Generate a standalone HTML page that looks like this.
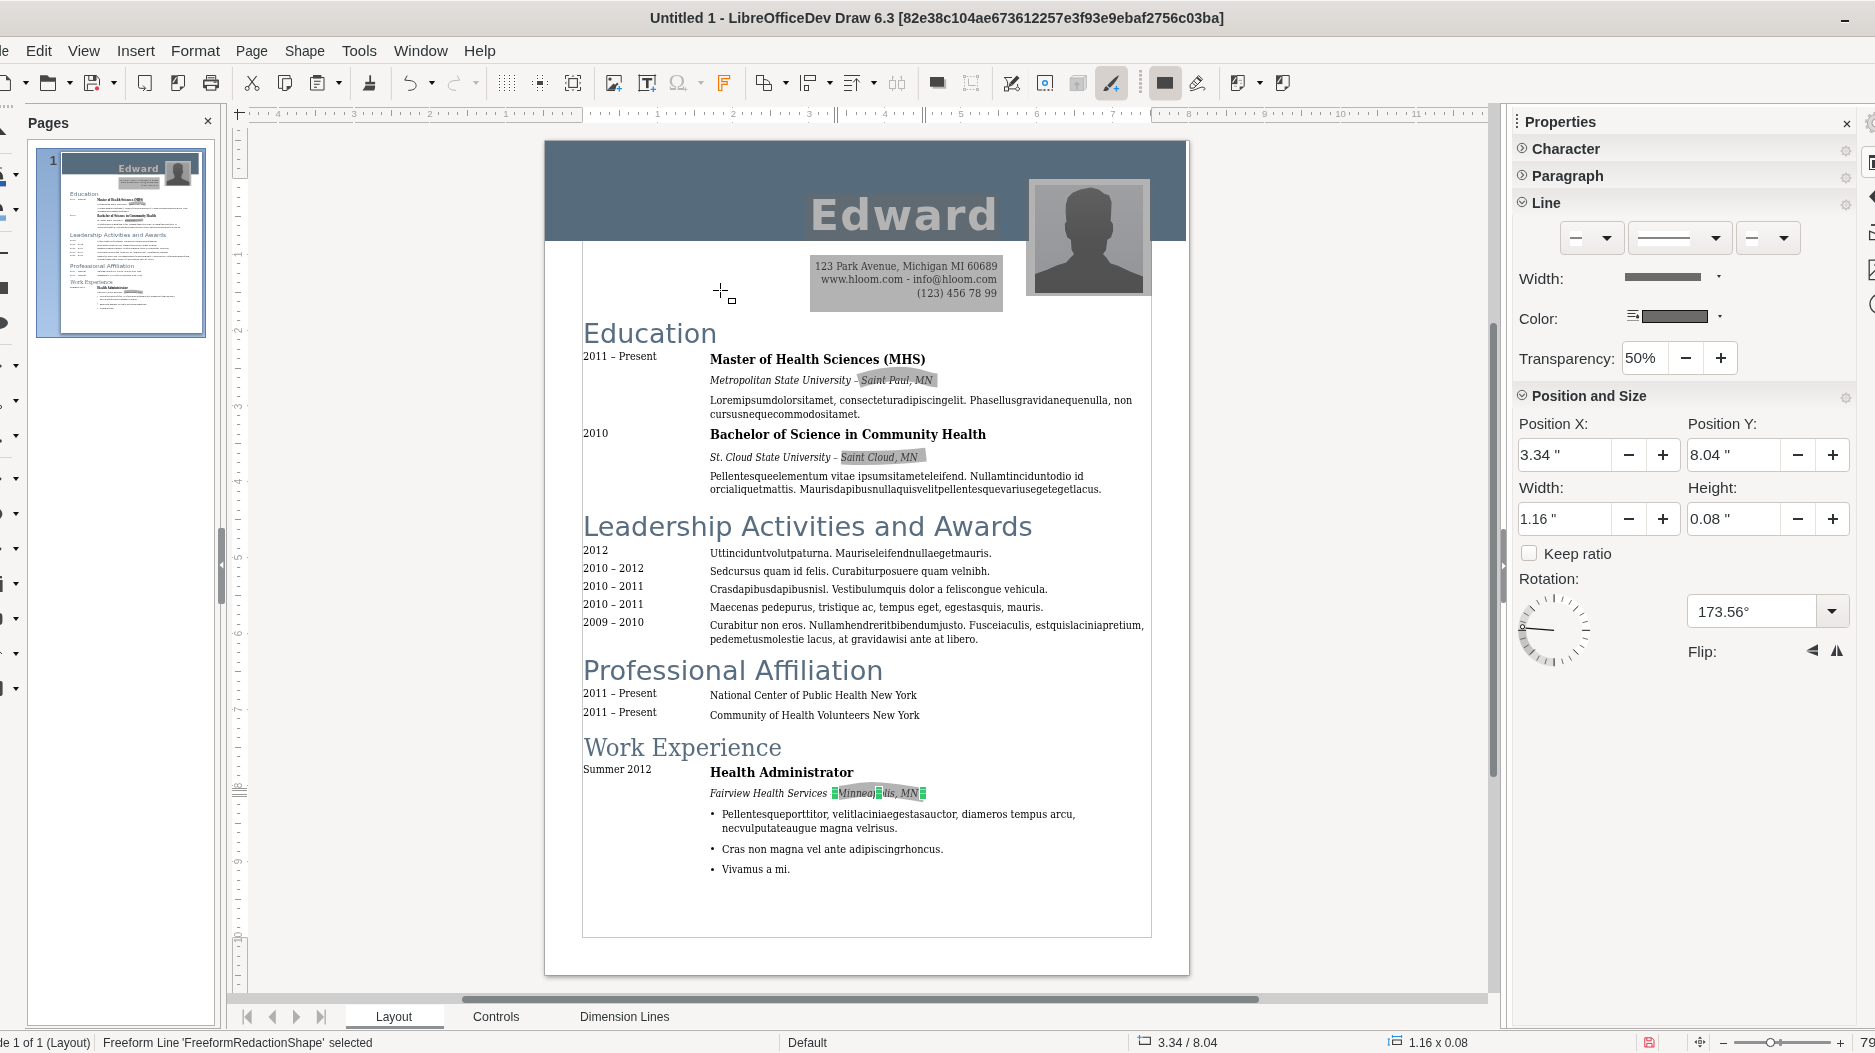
<!DOCTYPE html>
<html lang="en"><head><meta charset="utf-8"><title>Untitled 1 - LibreOfficeDev Draw 6.3</title>
<style>
*{box-sizing:border-box;margin:0;padding:0}
html,body{width:1875px;height:1053px;overflow:hidden;background:#f6f5f4;font-family:"Liberation Sans","DejaVu Sans",sans-serif;font-size:15px;color:#2e3436}
.a{position:absolute}
.t{position:absolute;white-space:nowrap;line-height:1;}
.ui{font-family:"Liberation Sans",sans-serif;color:#2e3436}
.b{font-weight:bold}
.ser{font-family:"DejaVu Serif Condensed","DejaVu Serif","Liberation Serif",serif;color:#000}
.dj{font-family:"DejaVu Sans","Liberation Sans",sans-serif}
svg{position:absolute;overflow:visible}
.sep{position:absolute;width:1px;background:#d9d6d2}
.arr{position:absolute;width:0;height:0;border-left:4px solid transparent;border-right:4px solid transparent;border-top:4px solid #2e3436}
.spin{position:absolute;background:#fff;border:1px solid #cdc7c2;border-radius:4px}
.spin i{position:absolute;top:0;bottom:0;width:1px;background:#e3dfdb}
#root{position:absolute;left:0;top:0;width:1875px;height:1053px;overflow:hidden;will-change:transform}
</style></head><body><div id="root">
<div class="a" style="left:0px;top:0px;width:1875px;height:37px;background:linear-gradient(#e2dfdc,#dad6d2);border-bottom:1px solid #bfb8b1;border-top:1px solid #f7f6f5"></div>
<span class="t ui b" style="left:649.5px;top:9.6px;font-size:15px;transform-origin:0 50%;transform:scaleX(0.9614);color:#2e3436">Untitled 1 - LibreOfficeDev Draw 6.3 [82e38c104ae673612257e3f93e9ebaf2756c03ba]</span>
<div class="a" style="left:1841px;top:20px;width:8.4px;height:2px;background:#1a1f22"></div>
<div class="a" style="left:1841px;top:22px;width:8.4px;height:1px;background:rgba(255,255,255,.85)"></div>
<div class="a" style="left:0px;top:37px;width:1875px;height:27px;background:#f6f5f4;border-bottom:1px solid #dcd8d4"></div>
<span class="t ui" style="left:-12.0px;top:42.5px;font-size:15px;transform-origin:0 50%;transform:scaleX(0.8688);">File</span>
<span class="t ui" style="left:26.0px;top:42.5px;font-size:15px;transform-origin:0 50%;transform:scaleX(1.0054);">Edit</span>
<span class="t ui" style="left:68.0px;top:42.5px;font-size:15px;transform-origin:0 50%;transform:scaleX(0.9922);">View</span>
<span class="t ui" style="left:117.0px;top:42.5px;font-size:15px;transform-origin:0 50%;transform:scaleX(1.0129);">Insert</span>
<span class="t ui" style="left:171.0px;top:42.5px;font-size:15px;transform-origin:0 50%;transform:scaleX(1.0312);">Format</span>
<span class="t ui" style="left:236.0px;top:42.5px;font-size:15px;transform-origin:0 50%;transform:scaleX(0.9131);">Page</span>
<span class="t ui" style="left:285.0px;top:42.5px;font-size:15px;transform-origin:0 50%;transform:scaleX(0.9222);">Shape</span>
<span class="t ui" style="left:342.0px;top:42.5px;font-size:15px;transform-origin:0 50%;transform:scaleX(0.9991);">Tools</span>
<span class="t ui" style="left:394.0px;top:42.5px;font-size:15px;transform-origin:0 50%;transform:scaleX(1.0120);">Window</span>
<span class="t ui" style="left:464.0px;top:42.5px;font-size:15px;transform-origin:0 50%;transform:scaleX(1.0370);">Help</span>
<span class="t" style="left:668.6px;top:70.5px;font-size:22.5px;line-height:24px;font-family:'Liberation Serif',serif;color:#b9b9b9">Ω</span>
<svg style="left:0;top:64px" width="1875" height="40" viewBox="0 64 1875 40" fill="none" stroke="#3d3d3d" stroke-width="1" stroke-linejoin="miter"><path d="M-4,75.5 H6.2 L10.4,80 V90.5 H-4" /><path d="M6,75.4 V80.2 H10.8 z" fill="#474747" stroke="none"/>
<path d="M22.8,81 h6.4 l-3.2,4 z" fill="#111" stroke="none"/>
<path d="M40,75.3 H47.2 L49.6,77.6 H56 V81.8 H40 z" fill="#474747" stroke="none"/><path d="M40.5,81.5 V90.5 H55.5 V81.5"/>
<path d="M66.8,81 h6.4 l-3.2,4 z" fill="#111" stroke="none"/>
<path d="M84.5,75.5 H96.4 L99.5,79.2 V85.4 M93.6,90.5 H84.5 V75.5"/><path d="M88.8,75.5 V80.4 H96 V75.5" /><rect x="93" y="76" width="3" height="4.4" fill="#474747" stroke="none"/><path d="M87.4,89.8 V84.1 H97"/><circle cx="97" cy="88.4" r="2.1" fill="#e23c52" stroke="none"/>
<path d="M110.8,81 h6.4 l-3.2,4 z" fill="#111" stroke="none"/>
<path d="M125.4,67 V100" stroke="#d7d3cf" stroke-width="1"/>
<path d="M138.5,86.6 V75.5 H151.2 V90.5 H146.6"/><path d="M138.5,86.5 Q138.5,88.3 140.4,88.3 H145.2"/><path d="M143,85.6 L145.7,88.3 L143,91"/>
<path d="M177.3,75.5 H184.5 V86.4 M171.8,84 V90.5 H180.1"/><path d="M179.9,86.4 H185 L179.9,90.6 z" fill="#474747" stroke="none"/><rect x="171.3" y="75.3" width="6.4" height="8.8" fill="#474747" stroke="none"/><path d="M172.9,82.6 L176.5,77.2" stroke="#f6f5f4" stroke-width="1.1"/>
<path d="M206.5,79.6 V75.5 H215.7 V79.6 M207.6,77.8 H214.6"/><rect x="203" y="79.6" width="16" height="8.6" rx="1" fill="#474747" stroke="none"/><rect x="204.6" y="81.4" width="12.8" height="3.6" fill="#f6f5f4" stroke="none"/><rect x="213.6" y="81.6" width="3" height="1.2" fill="#474747" stroke="none"/><rect x="206.4" y="85.4" width="9.4" height="4.7" fill="#f6f5f4" stroke="#3d3d3d" stroke-width="1.1"/>
<path d="M232.4,67 V100" stroke="#d7d3cf" stroke-width="1"/>
<path d="M247.6,76 L256,87 M256.6,76 L248.2,87" stroke-width="1.2"/><circle cx="247.2" cy="88.4" r="2"/><circle cx="257" cy="88.4" r="2"/>
<path d="M278.5,75.5 H290 V88.3 H278.5 z"/><path d="M282.6,78.7 H291.5 V86 L287,90.5 H282.6 z" fill="#f6f5f4"/><path d="M286.6,86 H291.9 L286.6,90.6 z" fill="#474747" stroke="none"/>
<path d="M310.5,77.5 H324 V90 H310.5 z"/><rect x="313" y="75" width="8.4" height="3.6" fill="#474747" stroke="none"/><path d="M314,81.3 H320.6 M314,84.3 H319.6 M314,87.3 H317" stroke-width="1.1"/>
<path d="M335.8,81 h6.4 l-3.2,4 z" fill="#111" stroke="none"/>
<path d="M350.4,67 V100" stroke="#d7d3cf" stroke-width="1"/>
<path d="M370.2,75.3 V82" stroke-width="1.7"/><rect x="365.3" y="81.8" width="9.8" height="2.6" fill="#474747" stroke="none"/><path d="M365.4,85.6 H375.1 Q375.4,88.6 374.2,90.5 H362.4 Q364.6,88.6 365.4,85.6 z" fill="#474747" stroke="none"/>
<path d="M391.3,67 V100" stroke="#d7d3cf" stroke-width="1"/>
<path d="M407.2,75.6 L404.7,80.1 L410,80.6 C 414,81 416.1,83 416.1,85.6 C 416.1,88.7 413,90.5 408.2,90.3"/>
<path d="M428.8,81 h6.4 l-3.2,4 z" fill="#111" stroke="none"/>
<g stroke="#b9b9b9"><path d="M457.2,75.6 L459.7,80.1 L454.4,80.6 C 450.4,81 448.3,83 448.3,85.6 C 448.3,88.7 451.4,90.5 456.2,90.3"/></g>
<path d="M472.8,81 h6.4 l-3.2,4 z" fill="#b9b9b9" stroke="none"/>
<path d="M486.6,67 V100" stroke="#d7d3cf" stroke-width="1"/>
<g fill="#3d3d3d" stroke="none"><rect x="498" y="74" width="3" height="3" fill="#fff" opacity=".7"/><rect x="498" y="77" width="3" height="3" fill="#fff" opacity=".7"/><rect x="498" y="80" width="3" height="3" fill="#fff" opacity=".7"/><rect x="498" y="83" width="3" height="3" fill="#fff" opacity=".7"/><rect x="498" y="86" width="3" height="3" fill="#fff" opacity=".7"/><rect x="498" y="89" width="3" height="3" fill="#fff" opacity=".7"/><rect x="503" y="74" width="3" height="3" fill="#fff" opacity=".7"/><rect x="503" y="77" width="3" height="3" fill="#fff" opacity=".7"/><rect x="503" y="80" width="3" height="3" fill="#fff" opacity=".7"/><rect x="503" y="83" width="3" height="3" fill="#fff" opacity=".7"/><rect x="503" y="86" width="3" height="3" fill="#fff" opacity=".7"/><rect x="503" y="89" width="3" height="3" fill="#fff" opacity=".7"/><rect x="508" y="74" width="3" height="3" fill="#fff" opacity=".7"/><rect x="508" y="77" width="3" height="3" fill="#fff" opacity=".7"/><rect x="508" y="80" width="3" height="3" fill="#fff" opacity=".7"/><rect x="508" y="83" width="3" height="3" fill="#fff" opacity=".7"/><rect x="508" y="86" width="3" height="3" fill="#fff" opacity=".7"/><rect x="508" y="89" width="3" height="3" fill="#fff" opacity=".7"/><rect x="513" y="74" width="3" height="3" fill="#fff" opacity=".7"/><rect x="513" y="77" width="3" height="3" fill="#fff" opacity=".7"/><rect x="513" y="80" width="3" height="3" fill="#fff" opacity=".7"/><rect x="513" y="83" width="3" height="3" fill="#fff" opacity=".7"/><rect x="513" y="86" width="3" height="3" fill="#fff" opacity=".7"/><rect x="513" y="89" width="3" height="3" fill="#fff" opacity=".7"/><rect x="499" y="75" width="1" height="1"/><rect x="499" y="78" width="1" height="1"/><rect x="499" y="81" width="1" height="1"/><rect x="499" y="84" width="1" height="1"/><rect x="499" y="87" width="1" height="1"/><rect x="499" y="90" width="1" height="1"/><rect x="504" y="75" width="1" height="1"/><rect x="504" y="78" width="1" height="1"/><rect x="504" y="81" width="1" height="1"/><rect x="504" y="84" width="1" height="1"/><rect x="504" y="87" width="1" height="1"/><rect x="504" y="90" width="1" height="1"/><rect x="509" y="75" width="1" height="1"/><rect x="509" y="78" width="1" height="1"/><rect x="509" y="81" width="1" height="1"/><rect x="509" y="84" width="1" height="1"/><rect x="509" y="87" width="1" height="1"/><rect x="509" y="90" width="1" height="1"/><rect x="514" y="75" width="1" height="1"/><rect x="514" y="78" width="1" height="1"/><rect x="514" y="81" width="1" height="1"/><rect x="514" y="84" width="1" height="1"/><rect x="514" y="87" width="1" height="1"/><rect x="514" y="90" width="1" height="1"/></g>
<g fill="#3d3d3d" stroke="none"><rect x="536" y="74" width="3" height="3" fill="#fff" opacity=".7"/><rect x="536" y="77" width="3" height="3" fill="#fff" opacity=".7"/><rect x="541" y="74" width="3" height="3" fill="#fff" opacity=".7"/><rect x="541" y="77" width="3" height="3" fill="#fff" opacity=".7"/><rect x="536" y="86" width="3" height="3" fill="#fff" opacity=".7"/><rect x="536" y="89" width="3" height="3" fill="#fff" opacity=".7"/><rect x="541" y="86" width="3" height="3" fill="#fff" opacity=".7"/><rect x="541" y="89" width="3" height="3" fill="#fff" opacity=".7"/><rect x="531" y="80" width="3" height="3" fill="#fff" opacity=".7"/><rect x="531" y="83" width="3" height="3" fill="#fff" opacity=".7"/><rect x="546" y="80" width="3" height="3" fill="#fff" opacity=".7"/><rect x="546" y="83" width="3" height="3" fill="#fff" opacity=".7"/><rect x="537" y="75" width="1" height="1"/><rect x="537" y="78" width="1" height="1"/><rect x="542" y="75" width="1" height="1"/><rect x="542" y="78" width="1" height="1"/><rect x="537" y="87" width="1" height="1"/><rect x="537" y="90" width="1" height="1"/><rect x="542" y="87" width="1" height="1"/><rect x="542" y="90" width="1" height="1"/><rect x="532" y="81" width="1" height="1"/><rect x="532" y="84" width="1" height="1"/><rect x="547" y="81" width="1" height="1"/><rect x="547" y="84" width="1" height="1"/><rect x="536" y="80" width="8" height="6" fill="#fff"/><rect x="537" y="81" width="6" height="4" fill="#474747"/></g>
<path d="M565.5,79 V75.5 H569 M577,75.5 H580.5 V79 M580.5,87 V90.5 H577 M569,90.5 H565.5 V87"/><rect x="568.8" y="78.6" width="8.6" height="8.8" stroke-width="1.1"/><path d="M571.6,76.4 L573,75 L574.4,76.4z M571.6,89.6 L573,91 L574.4,89.6z M566.4,81.6 L565,83 L566.4,84.4z M579.6,81.6 L581,83 L579.6,84.4z" fill="#474747" stroke="none"/>
<path d="M594.4,67 V100" stroke="#d7d3cf" stroke-width="1"/>
<path d="M621.2,82.6 V75.5 H606.8 V90.5 H615"/><circle cx="610" cy="79.1" r="1.7" fill="#474747" stroke="none"/><path d="M607.3,89.8 L613.6,83.4 L615,84.8 L617.4,82.6 L618.6,84.2 L616.4,86 L615.4,89.8 z" fill="#474747" stroke="none"/><path d="M619.3,86 V91.4 M616.6,88.7 H622" stroke="#1e8ee6" stroke-width="1.3"/>
<path d="M639.3,74.4 V91.6 M655,74.4 V85 M638.2,75.5 H656.2 M638.2,90.5 H649.4"/><path d="M642.2,79.2 H652.2" stroke-width="2.3"/><path d="M647.3,79 V88.2" stroke-width="2.6"/><path d="M653.3,86.6 V92 M650.6,89.3 H656" stroke="#1e8ee6" stroke-width="1.3"/>
<path d="M685.3,87.2 V91.4 M683.2,89.3 H687.4" stroke="#b9b9b9" stroke-width="1"/>
<path d="M697.8,81 h6.4 l-3.2,4 z" fill="#b9b9b9" stroke="none"/>
<path d="M718.6,75.5 H729.6 V78.6 H721.8 V81.6 H727.2 V84.4 H721.8 V90.5 H718.6 z" stroke="#f57900" stroke-width="1.2"/>
<path d="M745.6,67 V100" stroke="#d7d3cf" stroke-width="1"/>
<rect x="756.5" y="75.5" width="7" height="9"/><path d="M764,79.5 Q769.5,79.6 769.9,84"/><path d="M763.5,84.5 V90.5 H771.5 V84.5 H764" />
<path d="M782.8,81 h6.4 l-3.2,4 z" fill="#111" stroke="none"/>
<path d="M800.5,75 V91"/><rect x="804.5" y="75.5" width="11" height="5"/><rect x="804.5" y="85.5" width="4" height="5"/>
<path d="M826.8,81 h6.4 l-3.2,4 z" fill="#111" stroke="none"/>
<path d="M844,75.5 H860 M844,80.5 H852 M844,85.5 H852 M844,90.5 H852"/><path d="M856.5,78.8 V91 M853.2,82.4 L856.5,78.6 L859.8,82.4"/>
<path d="M870.8,81 h6.4 l-3.2,4 z" fill="#111" stroke="none"/>
<g stroke="#b9b9b9"><rect x="889.5" y="80.5" width="6" height="8"/><rect x="898.5" y="80.5" width="6" height="8"/><path d="M892.5,76 V80 M892.5,89 V91 M901.5,76 V80 M901.5,89 V91 M892.5,76 l1.6,1.4 M901.5,76 l-1.6,1.4"/></g>
<path d="M918.3,67 V100" stroke="#d7d3cf" stroke-width="1"/>
<rect x="932.6" y="79.3" width="13.6" height="9.4" fill="#b5b5b5" stroke="none"/><rect x="930" y="77" width="14" height="9.7" fill="#474747" stroke="none"/>
<g stroke="#b9b9b9"><path d="M966.6,76.5 H976 M966.6,89.5 H976 M964.5,78.8 V87.6 M977.5,78.8 V87.6" stroke-dasharray="1.6 1.5"/><rect x="963.5" y="75.5" width="2" height="2"/><rect x="976.5" y="75.5" width="2" height="2"/><rect x="963.5" y="88.5" width="2" height="2"/><rect x="976.5" y="88.5" width="2" height="2"/><path d="M968.5,78.6 V85.5 H975.6"/></g>
<path d="M992.4,67 V100" stroke="#d7d3cf" stroke-width="1"/>
<path d="M1004,77.5 H1012 M1004.6,77.8 Q1009,81.4 1007.2,86.6"/><rect x="1004.5" y="86.9" width="4" height="4"/><path d="M1008.6,88.9 H1015.6 M1017.6,84 V86.6"/><path d="M1017.6,86.6 L1019.8,88.9 L1017.6,91.2 L1015.4,88.9z" fill="#f6f5f4"/><path d="M1011.2,84 L1018.2,76.8" stroke-width="3.8"/><path d="M1008.4,87 L1009.6,82.8 L1012.6,85.6z" fill="#474747" stroke="none"/>
<path d="M1028.6,68 V100" stroke="#f1efed" stroke-width="1"/>
<path d="M1052.5,88 V75.5 H1037.5 V90 H1042.4"/><path d="M1043.5,90 H1053" stroke-width="1.5" stroke-dasharray="2 2"/><circle cx="1045" cy="83" r="2.3" stroke="#1e8ee6" stroke-width="1.5"/>
<g stroke="#b9b9b9" stroke-width=".9"><path d="M1070.2,78.2 L1073.2,75.6 H1086.4 L1083.3,78.2z" fill="#f2f2f2"/><path d="M1083.3,78.2 L1086.4,75.6 V88.2 L1083.3,90.6z" fill="#dcdcdc"/><rect x="1070.2" y="78.2" width="13.1" height="12.4" fill="#c9c9c9"/><path d="M1076.8,89.6 V83.4 M1074.4,85 L1076.8,82.6 L1079.2,85" stroke="#aeaeae" stroke-width="1.6" fill="none"/></g>
<rect x="1095" y="66" width="33" height="34.6" rx="5" fill="#d6d1cd" stroke="none"/>
<path d="M1118.9,75.2 C 1115.4,76.8 1110,82 1107.2,85.6 L1109.8,87.8 C 1113.4,84.6 1118,79 1118.9,75.2 z" fill="#474747" stroke="none"/><path d="M1106.4,86.2 C 1104.2,86.6 1104.6,89.4 1103.1,90.8 C 1105.8,91.4 1108.8,90.6 1109,88.4 z" fill="#474747" stroke="none"/><path d="M1116.4,86 V91.4 M1113.7,88.7 H1119.1" stroke="#1e8ee6" stroke-width="1.3"/>
<g fill="#bbb7b3" stroke="none"><rect x="1139" y="70" width="3" height="2.6"/><rect x="1139" y="74" width="3" height="2.6"/><rect x="1139" y="78.1" width="3" height="2.6"/><rect x="1139" y="82.2" width="3" height="2.6"/><rect x="1139" y="86.3" width="3" height="2.6"/><rect x="1139" y="90.3" width="3" height="2.6"/></g>
<rect x="1149" y="66" width="33" height="34.6" rx="5" fill="#d6d1cd" stroke="none"/><rect x="1157" y="77" width="16" height="11.7" fill="#474747" stroke="none"/>
<path d="M1190.2,88.2 V84.8 L1198.6,75.5 L1202.6,79.4 L1194,88 z"/><path d="M1192.2,82.8 L1196,86.2 M1193.8,81 L1197.6,84.4" /><path d="M1197,77.4 L1201,81" stroke-width="2"/><path d="M1190,90.8 C 1195,90.6 1198,87.8 1201.6,87.2 C 1205.6,86.8 1206,89.8 1203.2,90"/>
<path d="M1219.6,67 V100" stroke="#d7d3cf" stroke-width="1"/>
<path d="M1237,75.5 H1244.2 V86.4 M1231.5,84 V90.5 H1239.8"/><path d="M1239.6,86.4 H1244.7 L1239.6,90.6 z" fill="#474747" stroke="none"/><rect x="1231" y="75.3" width="6.4" height="8.8" fill="#474747" stroke="none"/><path d="M1232.6,82.6 L1236.2,77.2" stroke="#f6f5f4" stroke-width="1.1"/>
<path d="M1238.6,80.4 H1242 M1240,83.4 H1242 M1234,86.2 H1237" stroke="#9a9a9a" stroke-width=".9"/>
<path d="M1256.8,81 h6.4 l-3.2,4 z" fill="#111" stroke="none"/>
<path d="M1282,75.5 H1289.2 V86.4 M1276.5,84 V90.5 H1284.8"/><path d="M1284.6,86.4 H1289.7 L1284.6,90.6 z" fill="#474747" stroke="none"/><rect x="1276" y="75.3" width="6.4" height="8.8" fill="#474747" stroke="none"/><path d="M1277.6,82.6 L1281.2,77.2" stroke="#f6f5f4" stroke-width="1.1"/></svg>
<div class="a" style="left:-1px;top:105px;width:16px;height:3px;background:repeating-linear-gradient(90deg,#bcb8b4 0 2px,transparent 2px 4px)"></div>
<svg style="left:0;top:124px" width="10" height="16" viewBox="0 0 10 16"><path d="M0,4 L6.4,11 H0 z" fill="#3a3d3f"/></svg>
<div class="a" style="left:0px;top:153px;width:12px;height:1px;background:#d8d4d0"></div>
<div class="a" style="left:0px;top:231px;width:12px;height:1px;background:#d8d4d0"></div>
<div class="a" style="left:0px;top:344px;width:12px;height:1px;background:#d8d4d0"></div>
<div class="a" style="left:0px;top:457px;width:12px;height:1px;background:#d8d4d0"></div>
<svg style="left:0;top:164px" width="10" height="24" viewBox="0 0 10 24"><path d="M0,4 h2 M0,8 c1.6,0.6 2.6,3 2.8,7 H0 z" fill="#3a3d3f" stroke="#3a3d3f"/><rect x="0" y="17" width="6" height="5.4" fill="#2a5fb0"/></svg>
<div class="arr" style="left:12.8px;top:173px;border-width:4px 3.2px 0 3.2px;border-top-color:#111"></div>
<svg style="left:0;top:198px" width="10" height="24" viewBox="0 0 10 24"><path d="M0,6 c2,1 3,3.4 3,7 H0 z" fill="#3a3d3f"/><rect x="0" y="17.4" width="6" height="5.4" fill="#7aa7dc"/></svg>
<div class="arr" style="left:12.8px;top:207.5px;border-width:4px 3.2px 0 3.2px;border-top-color:#111"></div>
<div class="a" style="left:0px;top:252.4px;width:8px;height:1.4px;background:#3a3d3f"></div>
<div class="a" style="left:0px;top:282px;width:8px;height:12px;background:#46484a"></div>
<svg style="left:0;top:316px" width="10" height="14" viewBox="0 0 10 14"><ellipse cx="-2" cy="7" rx="10" ry="6" fill="#46484a"/></svg>
<div class="arr" style="left:12.8px;top:363.5px;border-width:4px 3.2px 0 3.2px;border-top-color:#111"></div>
<div class="arr" style="left:12.8px;top:398.5px;border-width:4px 3.2px 0 3.2px;border-top-color:#111"></div>
<div class="arr" style="left:12.8px;top:433.5px;border-width:4px 3.2px 0 3.2px;border-top-color:#111"></div>
<div class="arr" style="left:12.8px;top:476.5px;border-width:4px 3.2px 0 3.2px;border-top-color:#111"></div>
<div class="arr" style="left:12.8px;top:511.5px;border-width:4px 3.2px 0 3.2px;border-top-color:#111"></div>
<div class="arr" style="left:12.8px;top:546.5px;border-width:4px 3.2px 0 3.2px;border-top-color:#111"></div>
<div class="arr" style="left:12.8px;top:581.5px;border-width:4px 3.2px 0 3.2px;border-top-color:#111"></div>
<div class="arr" style="left:12.8px;top:616.5px;border-width:4px 3.2px 0 3.2px;border-top-color:#111"></div>
<div class="arr" style="left:12.8px;top:651.5px;border-width:4px 3.2px 0 3.2px;border-top-color:#111"></div>
<div class="arr" style="left:12.8px;top:686.5px;border-width:4px 3.2px 0 3.2px;border-top-color:#111"></div>
<svg style="left:0;top:355.5px" width="8" height="20" viewBox="0 -10 8 20"><circle cx="0" cy="0" r="1.6" fill="#3a3d3f"/></svg>
<svg style="left:0;top:390.5px" width="8" height="20" viewBox="0 -10 8 20"><circle cx="0" cy="6" r="1.6" fill="none" stroke="#3a3d3f"/></svg>
<svg style="left:0;top:425.5px" width="8" height="20" viewBox="0 -10 8 20"><circle cx="0" cy="5" r="1.8" fill="#3a3d3f"/></svg>
<svg style="left:0;top:468.5px" width="8" height="20" viewBox="0 -10 8 20"><circle cx="0" cy="0" r="1.4" fill="#3a3d3f"/></svg>
<svg style="left:0;top:503.5px" width="8" height="20" viewBox="0 -10 8 20"><ellipse cx="-4" cy="0" rx="6.4" ry="6" fill="#46484a"/></svg>
<svg style="left:0;top:538.5px" width="8" height="20" viewBox="0 -10 8 20"><circle cx="0" cy="0" r="1.4" fill="#3a3d3f"/></svg>
<svg style="left:0;top:573.5px" width="8" height="20" viewBox="0 -10 8 20"><rect x="-3" y="-4" width="5.6" height="12" fill="#46484a"/><rect x="-3" y="-8" width="5" height="2.4" fill="#46484a"/></svg>
<svg style="left:0;top:608.5px" width="8" height="20" viewBox="0 -10 8 20"><rect x="-6" y="-6" width="8.4" height="12" rx="3" fill="#46484a"/></svg>
<svg style="left:0;top:643.5px" width="8" height="20" viewBox="0 -10 8 20"><path d="M0,-2 l2,2" stroke="#3a3d3f"/></svg>
<svg style="left:0;top:678.5px" width="8" height="20" viewBox="0 -10 8 20"><rect x="-6" y="-8" width="8.6" height="15" rx="2" fill="#46484a"/></svg>
<div class="a" style="left:25px;top:103px;width:202px;height:1px;background:#adadad"></div>
<div class="a" style="left:220px;top:103px;width:1px;height:925px;background:#adadad"></div>
<div class="a" style="left:226px;top:103px;width:1px;height:928px;background:#adadad"></div>
<div class="a" style="left:25px;top:1028px;width:196px;height:1px;background:#adadad"></div>
<span class="t ui b" style="left:28.3px;top:115.0px;font-size:15.4px;transform-origin:0 50%;transform:scaleX(0.9017);color:#2e3436">Pages</span>
<svg style="left:203px;top:116px" width="10" height="10" viewBox="0 0 10 10"><path d="M2,2 l6,6 M8,2 l-6,6" stroke="#3a3d3f" stroke-width="1.1"/></svg>
<div class="a" style="left:27px;top:139px;width:188px;height:887px;background:#fff;border:1px solid #b4b2b0"></div>
<div class="a" style="left:36px;top:148px;width:170px;height:190px;background:linear-gradient(#8aa9d0,#abc8ea);border:1px solid #5a7db0"></div>
<span class="t ui b" style="left:49.8px;top:153.9px;font-size:13px;color:#464a4c">1</span>
<div class="a" style="left:61px;top:152px;width:140.7px;height:181.2px;background:#fff;box-shadow:0 1px 3px 1px rgba(40,50,70,.55)"></div>
<div class="a" style="left:61.9px;top:152.7px;width:643px;height:834px;overflow:hidden;transform-origin:0 0;transform:scale(0.21320)"><div class="a" style="left:0px;top:0px;width:640.8px;height:100px;background:#566c7d"></div>

<span class="t dj b" style="left:264.5px;top:53.0px;font-size:43px;letter-spacing:1.485px;color:#fff">Edward</span>
<span class="t ser" style="left:270.0px;top:119.8px;font-size:10.5px;transform-origin:0 50%;transform:scaleX(1.0073);color:#000">123 Park Avenue, Michigan MI 60689</span>
<span class="t ser" style="left:276.0px;top:133.2px;font-size:10.5px;transform-origin:0 50%;transform:scaleX(1.0497);color:#000">www.hloom.com - info@hloom.com</span>
<span class="t ser" style="left:372.0px;top:146.8px;font-size:10.5px;transform-origin:0 50%;transform:scaleX(1.0462);color:#000">(123) 456 78 99</span>
<div class="a" style="left:484px;top:38px;width:120.5px;height:117.3px;background:#fff"></div>
<svg style="left:490px;top:44px;overflow:hidden" width="108" height="108" viewBox="0 0 108 108"><defs><linearGradient id="pg2" x1="0" y1="0" x2="0" y2="1"><stop offset="0" stop-color="#d6d7dc"/><stop offset="1" stop-color="#bfc1c8"/></linearGradient><linearGradient id="sg2" x1="0" y1="0" x2="0" y2="1"><stop offset="0" stop-color="#585858"/><stop offset=".5" stop-color="#3e3e3e"/><stop offset="1" stop-color="#3a3a3a"/></linearGradient><filter id="bl2"><feGaussianBlur stdDeviation="1.6"/></filter></defs><rect width="108" height="108" fill="url(#pg2)"/><polygon points="0.0,108.1 0.0,89.7 12.2,85.3 22.4,80.8 31.4,78.2 36.5,72.4 39.7,69.2 37.2,64.7 36.5,54.5 32.7,51.9 30.8,45.5 30.4,39.1 32.1,36.5 31.2,27.6 31.4,19.9 33.3,12.8 37.8,8.3 45.5,5.1 55.8,3.2 63.5,5.1 68.6,9.0 73.7,10.9 76.0,17.3 75.6,27.6 75.0,35.9 77.3,39.1 77.6,45.5 75.6,51.9 71.8,54.5 70.5,64.7 67.3,69.2 70.5,72.4 75.0,78.8 82.7,81.4 95.5,87.2 108.1,92.3 108.1,108.1" fill="#e4e5ea" filter="url(#bl2)" opacity=".6"/><polygon points="0.0,108.1 0.0,89.7 12.2,85.3 22.4,80.8 31.4,78.2 36.5,72.4 39.7,69.2 37.2,64.7 36.5,54.5 32.7,51.9 30.8,45.5 30.4,39.1 32.1,36.5 31.2,27.6 31.4,19.9 33.3,12.8 37.8,8.3 45.5,5.1 55.8,3.2 63.5,5.1 68.6,9.0 73.7,10.9 76.0,17.3 75.6,27.6 75.0,35.9 77.3,39.1 77.6,45.5 75.6,51.9 71.8,54.5 70.5,64.7 67.3,69.2 70.5,72.4 75.0,78.8 82.7,81.4 95.5,87.2 108.1,92.3 108.1,108.1" fill="url(#sg2)" stroke="url(#sg2)" stroke-width="1.2" stroke-linejoin="round"/></svg>
<span class="t dj" style="left:38.0px;top:179.0px;font-size:27.4px;transform-origin:0 50%;transform:scaleX(0.9848);color:#586e80">Education</span>
<span class="t dj" style="left:38.0px;top:372.0px;font-size:27.4px;transform-origin:0 50%;transform:scaleX(0.9938);color:#586e80">Leadership Activities and Awards</span>
<span class="t dj" style="left:38.0px;top:515.6px;font-size:27.4px;transform-origin:0 50%;transform:scaleX(0.9917);color:#586e80">Professional Affiliation</span>
<span class="t ser" style="left:38.5px;top:593.6px;font-size:25px;transform-origin:0 50%;transform:scaleX(1.0158);color:#586e80">Work Experience</span>
<span class="t ser" style="left:38.3px;top:209.8px;font-size:10.5px;transform-origin:0 50%;transform:scaleX(1.0303);">2011 – Present</span>
<span class="t ser" style="left:38.3px;top:287.2px;font-size:10.5px;transform-origin:0 50%;transform:scaleX(1.0480);">2010</span>
<span class="t ser" style="left:38.3px;top:403.8px;font-size:10.5px;transform-origin:0 50%;transform:scaleX(1.0480);">2012</span>
<span class="t ser" style="left:38.3px;top:422.0px;font-size:10.5px;transform-origin:0 50%;transform:scaleX(1.0392);">2010 – 2012</span>
<span class="t ser" style="left:38.3px;top:440.0px;font-size:10.5px;transform-origin:0 50%;transform:scaleX(1.0392);">2010 – 2011</span>
<span class="t ser" style="left:38.3px;top:458.0px;font-size:10.5px;transform-origin:0 50%;transform:scaleX(1.0392);">2010 – 2011</span>
<span class="t ser" style="left:38.3px;top:476.0px;font-size:10.5px;transform-origin:0 50%;transform:scaleX(1.0392);">2009 – 2010</span>
<span class="t ser" style="left:38.3px;top:546.8px;font-size:10.5px;transform-origin:0 50%;transform:scaleX(1.0303);">2011 – Present</span>
<span class="t ser" style="left:38.3px;top:566.0px;font-size:10.5px;transform-origin:0 50%;transform:scaleX(1.0303);">2011 – Present</span>
<span class="t ser" style="left:38.3px;top:623.4px;font-size:10.5px;transform-origin:0 50%;transform:scaleX(1.0161);">Summer 2012</span>
<span class="t ser b" style="left:165.3px;top:212.0px;font-size:13.6px;transform-origin:0 50%;transform:scaleX(0.9378);">Master of Health Sciences (MHS)</span>
<span class="t ser b" style="left:165.3px;top:287.3px;font-size:13.6px;transform-origin:0 50%;transform:scaleX(0.9593);">Bachelor of Science in Community Health</span>
<span class="t ser b" style="left:165.3px;top:624.7px;font-size:13.6px;transform-origin:0 50%;transform:scaleX(0.9753);">Health Administrator</span>
<span class="t ser" style="left:165.3px;top:234.4px;font-size:10.5px;transform-origin:0 50%;transform:scaleX(0.9827);font-style:italic">Metropolitan State University – Saint Paul, MN</span>
<span class="t ser" style="left:165.3px;top:310.7px;font-size:10.5px;transform-origin:0 50%;transform:scaleX(0.9623);font-style:italic">St. Cloud State University – Saint Cloud, MN</span>
<span class="t ser" style="left:165.3px;top:647.0px;font-size:10.5px;transform-origin:0 50%;transform:scaleX(0.9756);font-style:italic">Fairview Health Services – Minneapolis, MN</span>
<span class="t ser" style="left:165.3px;top:254.0px;font-size:10.5px;transform-origin:0 50%;transform:scaleX(1.0241);">Loremipsumdolorsitamet, consecteturadipiscingelit. Phasellusgravidanequenulla, non</span>
<span class="t ser" style="left:165.3px;top:267.8px;font-size:10.5px;transform-origin:0 50%;transform:scaleX(1.0301);">cursusnequecommodositamet.</span>
<span class="t ser" style="left:165.3px;top:330.4px;font-size:10.5px;transform-origin:0 50%;transform:scaleX(1.0270);">Pellentesqueelementum vitae ipsumsitameteleifend. Nullamtinciduntodio id</span>
<span class="t ser" style="left:165.3px;top:343.3px;font-size:10.5px;transform-origin:0 50%;transform:scaleX(1.0188);">orcialiquetmattis. Maurisdapibusnullaquisvelitpellentesquevariusegetegetlacus.</span>
<span class="t ser" style="left:165.3px;top:406.7px;font-size:10.5px;transform-origin:0 50%;transform:scaleX(1.0214);">Uttinciduntvolutpaturna. Mauriseleifendnullaegetmauris.</span>
<span class="t ser" style="left:165.3px;top:424.5px;font-size:10.5px;transform-origin:0 50%;transform:scaleX(1.0123);">Sedcursus quam id felis. Curabiturposuere quam velnibh.</span>
<span class="t ser" style="left:165.3px;top:442.6px;font-size:10.5px;transform-origin:0 50%;transform:scaleX(1.0107);">Crasdapibusdapibusnisl. Vestibulumquis dolor a feliscongue vehicula.</span>
<span class="t ser" style="left:165.3px;top:460.5px;font-size:10.5px;transform-origin:0 50%;transform:scaleX(1.0027);">Maecenas pedepurus, tristique ac, tempus eget, egestasquis, mauris.</span>
<span class="t ser" style="left:165.3px;top:478.5px;font-size:10.5px;transform-origin:0 50%;transform:scaleX(1.0172);">Curabitur non eros. Nullamhendreritbibendumjusto. Fusceiaculis, estquislaciniapretium,</span>
<span class="t ser" style="left:165.3px;top:492.6px;font-size:10.5px;transform-origin:0 50%;transform:scaleX(1.0131);">pedemetusmolestie lacus, at gravidawisi ante at libero.</span>
<span class="t ser" style="left:165.3px;top:549.3px;font-size:10.5px;transform-origin:0 50%;transform:scaleX(1.0011);">National Center of Public Health New York</span>
<span class="t ser" style="left:165.3px;top:568.5px;font-size:10.5px;transform-origin:0 50%;transform:scaleX(1.0182);">Community of Health Volunteers New York</span>
<span class="t ser" style="left:177.3px;top:667.8px;font-size:10.5px;transform-origin:0 50%;transform:scaleX(1.0354);">Pellentesqueporttitor, velitlaciniaegestasauctor, diameros tempus arcu,</span>
<span class="t ser" style="left:177.3px;top:681.6px;font-size:10.5px;transform-origin:0 50%;transform:scaleX(1.0312);">necvulputateaugue magna velrisus.</span>
<span class="t ser" style="left:177.3px;top:702.6px;font-size:10.5px;transform-origin:0 50%;transform:scaleX(1.0394);">Cras non magna vel ante adipiscingrhoncus.</span>
<span class="t ser" style="left:177.3px;top:723.4px;font-size:10.5px;transform-origin:0 50%;transform:scaleX(1.0160);">Vivamus a mi.</span>
<div class="a" style="left:166.3px;top:671.2px;width:3.2px;height:3.2px;background:#111;border-radius:50%"></div>
<div class="a" style="left:166.3px;top:706px;width:3.2px;height:3.2px;background:#111;border-radius:50%"></div>
<div class="a" style="left:166.3px;top:726.8px;width:3.2px;height:3.2px;background:#111;border-radius:50%"></div>
<div class="a" style="left:261px;top:53px;width:193px;height:47px;background:rgba(104,104,104,.5)"></div>
<div class="a" style="left:264.6px;top:114px;width:193.4px;height:56.6px;background:rgba(104,104,104,.5)"></div>
<div class="a" style="left:481px;top:38px;width:125.5px;height:117.3px;background:rgba(104,104,104,.5)"></div>
<svg style="left:0;top:0" width="643" height="834" viewBox="545 141 643 834" fill="none" stroke="rgba(104,104,104,.5)" stroke-width="14"><path d="M858.5,381 C 875,376 895,372.5 910,374.5 S 928,380.5 937.5,380.5"/><path d="M841.3,457.4 C 865,458.5 890,458.5 926,454.6"/><path d="M835.5,793.3 C 853,791.5 860,789 872,789 S 905,792 924.3,795.4"/></svg></div>
<div class="a" style="left:218px;top:528px;width:7px;height:76px;background:#8e9294;border-radius:2px"></div>
<svg style="left:218px;top:560px" width="7" height="10" viewBox="0 0 7 10"><path d="M5.4,1.4 L1.4,5 L5.4,8.6z" fill="#fff"/></svg>
<div class="a" style="left:227px;top:104px;width:1261px;height:889px;background:#f6f5f4"></div>
<div class="a" style="left:237px;top:109px;width:1.2px;height:10.8px;background:#2e3436"></div>
<div class="a" style="left:234px;top:112px;width:11px;height:1.2px;background:#2e3436"></div>
<div class="a" style="left:583px;top:107px;width:567.6px;height:16px;background:#fff"></div>
<div class="a" style="left:249px;top:107px;width:334px;height:16px;border:1px solid #b6b6b6;border-radius:0 2px 2px 0;border-left:none"></div>
<div class="a" style="left:1150.6px;top:107px;width:337.4px;height:16px;border:1px solid #b6b6b6;border-radius:2px 0 0 2px;border-right:none"></div>
<svg style="left:0;top:0" width="1875" height="130"><path d="M249.5,112v3M258.5,112v3M268.5,112v3M287.5,112v3M296.5,112v3M306.5,112v3M315.5,110v6M325.5,112v3M334.5,112v3M344.5,112v3M363.5,112v3M372.5,112v3M381.5,112v3M391.5,110v6M400.5,112v3M410.5,112v3M419.5,112v3M438.5,112v3M448.5,112v3M457.5,112v3M467.5,110v6M476.5,112v3M486.5,112v3M495.5,112v3M514.5,112v3M524.5,112v3M533.5,112v3M543.5,110v6M552.5,112v3M562.5,112v3M571.5,112v3M590.5,112v3M600.5,112v3M609.5,112v3M619.5,110v6M628.5,112v3M638.5,112v3M647.5,112v3M666.5,112v3M675.5,112v3M685.5,112v3M694.5,110v6M704.5,112v3M713.5,112v3M723.5,112v3M742.5,112v3M751.5,112v3M761.5,112v3M770.5,110v6M780.5,112v3M789.5,112v3M799.5,112v3M818.5,112v3M827.5,112v3M837.5,112v3M846.5,110v6M856.5,112v3M865.5,112v3M875.5,112v3M894.5,112v3M903.5,112v3M913.5,112v3M922.5,110v6M932.5,112v3M941.5,112v3M951.5,112v3M970.5,112v3M979.5,112v3M988.5,112v3M998.5,110v6M1007.5,112v3M1017.5,112v3M1026.5,112v3M1045.5,112v3M1055.5,112v3M1064.5,112v3M1074.5,110v6M1083.5,112v3M1093.5,112v3M1102.5,112v3M1121.5,112v3M1131.5,112v3M1140.5,112v3M1150.5,110v6M1159.5,112v3M1169.5,112v3M1178.5,112v3M1197.5,112v3M1207.5,112v3M1216.5,112v3M1226.5,110v6M1235.5,112v3M1245.5,112v3M1254.5,112v3M1273.5,112v3M1282.5,112v3M1292.5,112v3M1301.5,110v6M1311.5,112v3M1320.5,112v3M1330.5,112v3M1349.5,112v3M1358.5,112v3M1368.5,112v3M1377.5,110v6M1387.5,112v3M1396.5,112v3M1406.5,112v3M1425.5,112v3M1434.5,112v3M1444.5,112v3M1453.5,110v6M1463.5,112v3M1472.5,112v3M1482.5,112v3" stroke="#9a9a9a" stroke-width="1" fill="none"/></svg>
<span class="t ui" style="left:268.2px;top:106.9px;width:20px;text-align:center;font-size:9.6px;color:#a2a2a2;line-height:13px">4</span>
<div class="a" style="left:277.35px;top:107px;width:1.4px;height:1px;background:#f6f5f4"></div>
<div class="a" style="left:277.35px;top:122px;width:1.4px;height:1px;background:#f6f5f4"></div>
<span class="t ui" style="left:344.1px;top:106.9px;width:20px;text-align:center;font-size:9.6px;color:#a2a2a2;line-height:13px">3</span>
<div class="a" style="left:353.225px;top:107px;width:1.4px;height:1px;background:#f6f5f4"></div>
<div class="a" style="left:353.225px;top:122px;width:1.4px;height:1px;background:#f6f5f4"></div>
<span class="t ui" style="left:420.0px;top:106.9px;width:20px;text-align:center;font-size:9.6px;color:#a2a2a2;line-height:13px">2</span>
<div class="a" style="left:429.1px;top:107px;width:1.4px;height:1px;background:#f6f5f4"></div>
<div class="a" style="left:429.1px;top:122px;width:1.4px;height:1px;background:#f6f5f4"></div>
<span class="t ui" style="left:495.9px;top:106.9px;width:20px;text-align:center;font-size:9.6px;color:#a2a2a2;line-height:13px">1</span>
<div class="a" style="left:504.975px;top:107px;width:1.4px;height:1px;background:#f6f5f4"></div>
<div class="a" style="left:504.975px;top:122px;width:1.4px;height:1px;background:#f6f5f4"></div>
<span class="t ui" style="left:647.6px;top:106.9px;width:20px;text-align:center;font-size:9.6px;color:#a2a2a2;line-height:13px">1</span>
<div class="a" style="left:657px;top:107px;width:1px;height:1px;background:#b4b4b4"></div>
<div class="a" style="left:657px;top:121.6px;width:1px;height:1px;background:#b4b4b4"></div>
<span class="t ui" style="left:723.5px;top:106.9px;width:20px;text-align:center;font-size:9.6px;color:#a2a2a2;line-height:13px">2</span>
<div class="a" style="left:732px;top:107px;width:1px;height:1px;background:#b4b4b4"></div>
<div class="a" style="left:732px;top:121.6px;width:1px;height:1px;background:#b4b4b4"></div>
<span class="t ui" style="left:799.4px;top:106.9px;width:20px;text-align:center;font-size:9.6px;color:#a2a2a2;line-height:13px">3</span>
<div class="a" style="left:808px;top:107px;width:1px;height:1px;background:#b4b4b4"></div>
<div class="a" style="left:808px;top:121.6px;width:1px;height:1px;background:#b4b4b4"></div>
<span class="t ui" style="left:875.2px;top:106.9px;width:20px;text-align:center;font-size:9.6px;color:#a2a2a2;line-height:13px">4</span>
<div class="a" style="left:884px;top:107px;width:1px;height:1px;background:#b4b4b4"></div>
<div class="a" style="left:884px;top:121.6px;width:1px;height:1px;background:#b4b4b4"></div>
<span class="t ui" style="left:951.1px;top:106.9px;width:20px;text-align:center;font-size:9.6px;color:#a2a2a2;line-height:13px">5</span>
<div class="a" style="left:960px;top:107px;width:1px;height:1px;background:#b4b4b4"></div>
<div class="a" style="left:960px;top:121.6px;width:1px;height:1px;background:#b4b4b4"></div>
<span class="t ui" style="left:1027.0px;top:106.9px;width:20px;text-align:center;font-size:9.6px;color:#a2a2a2;line-height:13px">6</span>
<div class="a" style="left:1036px;top:107px;width:1px;height:1px;background:#b4b4b4"></div>
<div class="a" style="left:1036px;top:121.6px;width:1px;height:1px;background:#b4b4b4"></div>
<span class="t ui" style="left:1102.9px;top:106.9px;width:20px;text-align:center;font-size:9.6px;color:#a2a2a2;line-height:13px">7</span>
<div class="a" style="left:1112px;top:107px;width:1px;height:1px;background:#b4b4b4"></div>
<div class="a" style="left:1112px;top:121.6px;width:1px;height:1px;background:#b4b4b4"></div>
<span class="t ui" style="left:1178.8px;top:106.9px;width:20px;text-align:center;font-size:9.6px;color:#a2a2a2;line-height:13px">8</span>
<div class="a" style="left:1187.85px;top:107px;width:1.4px;height:1px;background:#f6f5f4"></div>
<div class="a" style="left:1187.85px;top:122px;width:1.4px;height:1px;background:#f6f5f4"></div>
<span class="t ui" style="left:1254.6px;top:106.9px;width:20px;text-align:center;font-size:9.6px;color:#a2a2a2;line-height:13px">9</span>
<div class="a" style="left:1263.73px;top:107px;width:1.4px;height:1px;background:#f6f5f4"></div>
<div class="a" style="left:1263.73px;top:122px;width:1.4px;height:1px;background:#f6f5f4"></div>
<span class="t ui" style="left:1330.5px;top:106.9px;width:20px;text-align:center;font-size:9.6px;color:#a2a2a2;line-height:13px">10</span>
<div class="a" style="left:1339.6px;top:107px;width:1.4px;height:1px;background:#f6f5f4"></div>
<div class="a" style="left:1339.6px;top:122px;width:1.4px;height:1px;background:#f6f5f4"></div>
<span class="t ui" style="left:1406.4px;top:106.9px;width:20px;text-align:center;font-size:9.6px;color:#a2a2a2;line-height:13px">11</span>
<div class="a" style="left:1415.48px;top:107px;width:1.4px;height:1px;background:#f6f5f4"></div>
<div class="a" style="left:1415.48px;top:122px;width:1.4px;height:1px;background:#f6f5f4"></div>
<div class="a" style="left:834px;top:107px;width:1px;height:16px;background:#8c8c8c"></div>
<div class="a" style="left:836.5px;top:107px;width:1px;height:16px;background:#8c8c8c"></div>
<div class="a" style="left:922px;top:107px;width:1px;height:16px;background:#8c8c8c"></div>
<div class="a" style="left:924.5px;top:107px;width:1px;height:16px;background:#8c8c8c"></div>
<div class="a" style="left:232px;top:179.3px;width:16px;height:758.1px;background:#fff"></div>
<div class="a" style="left:232px;top:128px;width:16px;height:51.3px;border:1px solid #b6b6b6;border-radius:0 0 2px 2px;border-top:none"></div>
<div class="a" style="left:232px;top:937.4px;width:16px;height:55.6px;border:1px solid #b6b6b6;border-radius:2px 2px 0 0;border-bottom:none"></div>
<svg style="left:0;top:0" width="260" height="1000"><path d="M237,130.5h3.2M235,140.5h6M237,149.5h3.2M237,159.5h3.2M237,168.5h3.2M237,187.5h3.2M237,197.5h3.2M237,206.5h3.2M235,216.5h6M237,225.5h3.2M237,235.5h3.2M237,244.5h3.2M237,263.5h3.2M237,273.5h3.2M237,282.5h3.2M235,292.5h6M237,301.5h3.2M237,311.5h3.2M237,320.5h3.2M237,339.5h3.2M237,349.5h3.2M237,358.5h3.2M235,368.5h6M237,377.5h3.2M237,387.5h3.2M237,396.5h3.2M237,415.5h3.2M237,424.5h3.2M237,434.5h3.2M235,443.5h6M237,453.5h3.2M237,462.5h3.2M237,472.5h3.2M237,491.5h3.2M237,500.5h3.2M237,510.5h3.2M235,519.5h6M237,529.5h3.2M237,538.5h3.2M237,548.5h3.2M237,567.5h3.2M237,576.5h3.2M237,586.5h3.2M235,595.5h6M237,605.5h3.2M237,614.5h3.2M237,624.5h3.2M237,643.5h3.2M237,652.5h3.2M237,662.5h3.2M235,671.5h6M237,681.5h3.2M237,690.5h3.2M237,699.5h3.2M237,718.5h3.2M237,728.5h3.2M237,737.5h3.2M235,747.5h6M237,756.5h3.2M237,766.5h3.2M237,775.5h3.2M237,794.5h3.2M237,804.5h3.2M237,813.5h3.2M235,823.5h6M237,832.5h3.2M237,842.5h3.2M237,851.5h3.2M237,870.5h3.2M237,880.5h3.2M237,889.5h3.2M235,899.5h6M237,908.5h3.2M237,918.5h3.2M237,927.5h3.2M237,946.5h3.2M237,956.5h3.2M237,965.5h3.2M235,975.5h6M237,984.5h3.2" stroke="#9a9a9a" stroke-width="1" fill="none"/></svg>
<span class="t ui" style="left:228.2px;top:247.7px;width:20px;height:13px;text-align:center;font-size:10px;color:#a2a2a2;line-height:13px;transform:rotate(-90deg)">1</span>
<div class="a" style="left:232px;top:254px;width:1px;height:1px;background:#b4b4b4"></div>
<div class="a" style="left:246.6px;top:254px;width:1px;height:1px;background:#b4b4b4"></div>
<span class="t ui" style="left:228.2px;top:323.6px;width:20px;height:13px;text-align:center;font-size:10px;color:#a2a2a2;line-height:13px;transform:rotate(-90deg)">2</span>
<div class="a" style="left:232px;top:330px;width:1px;height:1px;background:#b4b4b4"></div>
<div class="a" style="left:246.6px;top:330px;width:1px;height:1px;background:#b4b4b4"></div>
<span class="t ui" style="left:228.2px;top:399.5px;width:20px;height:13px;text-align:center;font-size:10px;color:#a2a2a2;line-height:13px;transform:rotate(-90deg)">3</span>
<div class="a" style="left:232px;top:405px;width:1px;height:1px;background:#b4b4b4"></div>
<div class="a" style="left:246.6px;top:405px;width:1px;height:1px;background:#b4b4b4"></div>
<span class="t ui" style="left:228.2px;top:475.4px;width:20px;height:13px;text-align:center;font-size:10px;color:#a2a2a2;line-height:13px;transform:rotate(-90deg)">4</span>
<div class="a" style="left:232px;top:481px;width:1px;height:1px;background:#b4b4b4"></div>
<div class="a" style="left:246.6px;top:481px;width:1px;height:1px;background:#b4b4b4"></div>
<span class="t ui" style="left:228.2px;top:551.2px;width:20px;height:13px;text-align:center;font-size:10px;color:#a2a2a2;line-height:13px;transform:rotate(-90deg)">5</span>
<div class="a" style="left:232px;top:557px;width:1px;height:1px;background:#b4b4b4"></div>
<div class="a" style="left:246.6px;top:557px;width:1px;height:1px;background:#b4b4b4"></div>
<span class="t ui" style="left:228.2px;top:627.1px;width:20px;height:13px;text-align:center;font-size:10px;color:#a2a2a2;line-height:13px;transform:rotate(-90deg)">6</span>
<div class="a" style="left:232px;top:633px;width:1px;height:1px;background:#b4b4b4"></div>
<div class="a" style="left:246.6px;top:633px;width:1px;height:1px;background:#b4b4b4"></div>
<span class="t ui" style="left:228.2px;top:703.0px;width:20px;height:13px;text-align:center;font-size:10px;color:#a2a2a2;line-height:13px;transform:rotate(-90deg)">7</span>
<div class="a" style="left:232px;top:709px;width:1px;height:1px;background:#b4b4b4"></div>
<div class="a" style="left:246.6px;top:709px;width:1px;height:1px;background:#b4b4b4"></div>
<span class="t ui" style="left:228.2px;top:778.9px;width:20px;height:13px;text-align:center;font-size:10px;color:#a2a2a2;line-height:13px;transform:rotate(-90deg)">8</span>
<div class="a" style="left:232px;top:785px;width:1px;height:1px;background:#b4b4b4"></div>
<div class="a" style="left:246.6px;top:785px;width:1px;height:1px;background:#b4b4b4"></div>
<span class="t ui" style="left:228.2px;top:854.7px;width:20px;height:13px;text-align:center;font-size:10px;color:#a2a2a2;line-height:13px;transform:rotate(-90deg)">9</span>
<div class="a" style="left:232px;top:861px;width:1px;height:1px;background:#b4b4b4"></div>
<div class="a" style="left:246.6px;top:861px;width:1px;height:1px;background:#b4b4b4"></div>
<span class="t ui" style="left:228.2px;top:930.6px;width:20px;height:13px;text-align:center;font-size:10px;color:#a2a2a2;line-height:13px;transform:rotate(-90deg)">10</span>
<div class="a" style="left:232px;top:788px;width:15px;height:1px;background:#9a9a9a"></div>
<div class="a" style="left:232px;top:790px;width:15px;height:1px;background:#9a9a9a"></div>
<div class="a" style="left:232px;top:794px;width:15px;height:1px;background:#9a9a9a"></div>
<div class="a" style="left:232px;top:796px;width:15px;height:1px;background:#9a9a9a"></div>
<div class="a" style="left:1488px;top:103px;width:12px;height:890px;background:#cdcdcd"></div>
<div class="a" style="left:1490px;top:323px;width:7px;height:454px;background:#7f8486;border-radius:3.5px"></div>
<div class="a" style="left:227px;top:993px;width:1261px;height:11px;background:#cecece"></div>
<div class="a" style="left:462px;top:995.5px;width:797px;height:7px;background:#7f8486;border-radius:3.5px"></div>
<div class="a" style="left:1488px;top:993px;width:12px;height:11px;background:#f6f5f4"></div>
<div class="a" style="left:545px;top:141px;width:643.8px;height:833.9px;background:#fff;box-shadow:0 0 0 .7px #96989b,0 1.5px 5px .5px rgba(0,0,0,.42)"></div>
<div class="a" style="left:545px;top:141px;width:644px;height:834px;overflow:hidden"><div class="a" style="left:0px;top:0px;width:640.8px;height:100px;background:#566c7d"></div>
<div class="a" style="left:36.7px;top:100px;width:569.9px;height:697px;border:1px solid #c9c9c9;border-top:none"></div>
<span class="t dj b" style="left:264.5px;top:53.0px;font-size:43px;letter-spacing:1.485px;color:#fff">Edward</span>
<span class="t ser" style="left:270.0px;top:119.8px;font-size:10.5px;transform-origin:0 50%;transform:scaleX(1.0073);color:#000">123 Park Avenue, Michigan MI 60689</span>
<span class="t ser" style="left:276.0px;top:133.2px;font-size:10.5px;transform-origin:0 50%;transform:scaleX(1.0497);color:#000">www.hloom.com - info@hloom.com</span>
<span class="t ser" style="left:372.0px;top:146.8px;font-size:10.5px;transform-origin:0 50%;transform:scaleX(1.0462);color:#000">(123) 456 78 99</span>
<div class="a" style="left:484px;top:38px;width:120.5px;height:117.3px;background:#fff"></div>
<svg style="left:490px;top:44px;overflow:hidden" width="108" height="108" viewBox="0 0 108 108"><defs><linearGradient id="pg" x1="0" y1="0" x2="0" y2="1"><stop offset="0" stop-color="#d6d7dc"/><stop offset="1" stop-color="#bfc1c8"/></linearGradient><linearGradient id="sg" x1="0" y1="0" x2="0" y2="1"><stop offset="0" stop-color="#585858"/><stop offset=".5" stop-color="#3e3e3e"/><stop offset="1" stop-color="#3a3a3a"/></linearGradient><filter id="bl"><feGaussianBlur stdDeviation="1.6"/></filter></defs><rect width="108" height="108" fill="url(#pg)"/><polygon points="0.0,108.1 0.0,89.7 12.2,85.3 22.4,80.8 31.4,78.2 36.5,72.4 39.7,69.2 37.2,64.7 36.5,54.5 32.7,51.9 30.8,45.5 30.4,39.1 32.1,36.5 31.2,27.6 31.4,19.9 33.3,12.8 37.8,8.3 45.5,5.1 55.8,3.2 63.5,5.1 68.6,9.0 73.7,10.9 76.0,17.3 75.6,27.6 75.0,35.9 77.3,39.1 77.6,45.5 75.6,51.9 71.8,54.5 70.5,64.7 67.3,69.2 70.5,72.4 75.0,78.8 82.7,81.4 95.5,87.2 108.1,92.3 108.1,108.1" fill="#e4e5ea" filter="url(#bl)" opacity=".6"/><polygon points="0.0,108.1 0.0,89.7 12.2,85.3 22.4,80.8 31.4,78.2 36.5,72.4 39.7,69.2 37.2,64.7 36.5,54.5 32.7,51.9 30.8,45.5 30.4,39.1 32.1,36.5 31.2,27.6 31.4,19.9 33.3,12.8 37.8,8.3 45.5,5.1 55.8,3.2 63.5,5.1 68.6,9.0 73.7,10.9 76.0,17.3 75.6,27.6 75.0,35.9 77.3,39.1 77.6,45.5 75.6,51.9 71.8,54.5 70.5,64.7 67.3,69.2 70.5,72.4 75.0,78.8 82.7,81.4 95.5,87.2 108.1,92.3 108.1,108.1" fill="url(#sg)" stroke="url(#sg)" stroke-width="1.2" stroke-linejoin="round"/></svg>
<span class="t dj" style="left:38.0px;top:179.0px;font-size:27.4px;transform-origin:0 50%;transform:scaleX(0.9848);color:#586e80">Education</span>
<span class="t dj" style="left:38.0px;top:372.0px;font-size:27.4px;transform-origin:0 50%;transform:scaleX(0.9938);color:#586e80">Leadership Activities and Awards</span>
<span class="t dj" style="left:38.0px;top:515.6px;font-size:27.4px;transform-origin:0 50%;transform:scaleX(0.9917);color:#586e80">Professional Affiliation</span>
<span class="t ser" style="left:38.5px;top:593.6px;font-size:25px;transform-origin:0 50%;transform:scaleX(1.0158);color:#586e80">Work Experience</span>
<span class="t ser" style="left:38.3px;top:209.8px;font-size:10.5px;transform-origin:0 50%;transform:scaleX(1.0303);">2011 – Present</span>
<span class="t ser" style="left:38.3px;top:287.2px;font-size:10.5px;transform-origin:0 50%;transform:scaleX(1.0480);">2010</span>
<span class="t ser" style="left:38.3px;top:403.8px;font-size:10.5px;transform-origin:0 50%;transform:scaleX(1.0480);">2012</span>
<span class="t ser" style="left:38.3px;top:422.0px;font-size:10.5px;transform-origin:0 50%;transform:scaleX(1.0392);">2010 – 2012</span>
<span class="t ser" style="left:38.3px;top:440.0px;font-size:10.5px;transform-origin:0 50%;transform:scaleX(1.0392);">2010 – 2011</span>
<span class="t ser" style="left:38.3px;top:458.0px;font-size:10.5px;transform-origin:0 50%;transform:scaleX(1.0392);">2010 – 2011</span>
<span class="t ser" style="left:38.3px;top:476.0px;font-size:10.5px;transform-origin:0 50%;transform:scaleX(1.0392);">2009 – 2010</span>
<span class="t ser" style="left:38.3px;top:546.8px;font-size:10.5px;transform-origin:0 50%;transform:scaleX(1.0303);">2011 – Present</span>
<span class="t ser" style="left:38.3px;top:566.0px;font-size:10.5px;transform-origin:0 50%;transform:scaleX(1.0303);">2011 – Present</span>
<span class="t ser" style="left:38.3px;top:623.4px;font-size:10.5px;transform-origin:0 50%;transform:scaleX(1.0161);">Summer 2012</span>
<span class="t ser b" style="left:165.3px;top:212.0px;font-size:13.6px;transform-origin:0 50%;transform:scaleX(0.9378);">Master of Health Sciences (MHS)</span>
<span class="t ser b" style="left:165.3px;top:287.3px;font-size:13.6px;transform-origin:0 50%;transform:scaleX(0.9593);">Bachelor of Science in Community Health</span>
<span class="t ser b" style="left:165.3px;top:624.7px;font-size:13.6px;transform-origin:0 50%;transform:scaleX(0.9753);">Health Administrator</span>
<span class="t ser" style="left:165.3px;top:234.4px;font-size:10.5px;transform-origin:0 50%;transform:scaleX(0.9827);font-style:italic">Metropolitan State University – Saint Paul, MN</span>
<span class="t ser" style="left:165.3px;top:310.7px;font-size:10.5px;transform-origin:0 50%;transform:scaleX(0.9623);font-style:italic">St. Cloud State University – Saint Cloud, MN</span>
<span class="t ser" style="left:165.3px;top:647.0px;font-size:10.5px;transform-origin:0 50%;transform:scaleX(0.9756);font-style:italic">Fairview Health Services – Minneapolis, MN</span>
<span class="t ser" style="left:165.3px;top:254.0px;font-size:10.5px;transform-origin:0 50%;transform:scaleX(1.0241);">Loremipsumdolorsitamet, consecteturadipiscingelit. Phasellusgravidanequenulla, non</span>
<span class="t ser" style="left:165.3px;top:267.8px;font-size:10.5px;transform-origin:0 50%;transform:scaleX(1.0301);">cursusnequecommodositamet.</span>
<span class="t ser" style="left:165.3px;top:330.4px;font-size:10.5px;transform-origin:0 50%;transform:scaleX(1.0270);">Pellentesqueelementum vitae ipsumsitameteleifend. Nullamtinciduntodio id</span>
<span class="t ser" style="left:165.3px;top:343.3px;font-size:10.5px;transform-origin:0 50%;transform:scaleX(1.0188);">orcialiquetmattis. Maurisdapibusnullaquisvelitpellentesquevariusegetegetlacus.</span>
<span class="t ser" style="left:165.3px;top:406.7px;font-size:10.5px;transform-origin:0 50%;transform:scaleX(1.0214);">Uttinciduntvolutpaturna. Mauriseleifendnullaegetmauris.</span>
<span class="t ser" style="left:165.3px;top:424.5px;font-size:10.5px;transform-origin:0 50%;transform:scaleX(1.0123);">Sedcursus quam id felis. Curabiturposuere quam velnibh.</span>
<span class="t ser" style="left:165.3px;top:442.6px;font-size:10.5px;transform-origin:0 50%;transform:scaleX(1.0107);">Crasdapibusdapibusnisl. Vestibulumquis dolor a feliscongue vehicula.</span>
<span class="t ser" style="left:165.3px;top:460.5px;font-size:10.5px;transform-origin:0 50%;transform:scaleX(1.0027);">Maecenas pedepurus, tristique ac, tempus eget, egestasquis, mauris.</span>
<span class="t ser" style="left:165.3px;top:478.5px;font-size:10.5px;transform-origin:0 50%;transform:scaleX(1.0172);">Curabitur non eros. Nullamhendreritbibendumjusto. Fusceiaculis, estquislaciniapretium,</span>
<span class="t ser" style="left:165.3px;top:492.6px;font-size:10.5px;transform-origin:0 50%;transform:scaleX(1.0131);">pedemetusmolestie lacus, at gravidawisi ante at libero.</span>
<span class="t ser" style="left:165.3px;top:549.3px;font-size:10.5px;transform-origin:0 50%;transform:scaleX(1.0011);">National Center of Public Health New York</span>
<span class="t ser" style="left:165.3px;top:568.5px;font-size:10.5px;transform-origin:0 50%;transform:scaleX(1.0182);">Community of Health Volunteers New York</span>
<span class="t ser" style="left:177.3px;top:667.8px;font-size:10.5px;transform-origin:0 50%;transform:scaleX(1.0354);">Pellentesqueporttitor, velitlaciniaegestasauctor, diameros tempus arcu,</span>
<span class="t ser" style="left:177.3px;top:681.6px;font-size:10.5px;transform-origin:0 50%;transform:scaleX(1.0312);">necvulputateaugue magna velrisus.</span>
<span class="t ser" style="left:177.3px;top:702.6px;font-size:10.5px;transform-origin:0 50%;transform:scaleX(1.0394);">Cras non magna vel ante adipiscingrhoncus.</span>
<span class="t ser" style="left:177.3px;top:723.4px;font-size:10.5px;transform-origin:0 50%;transform:scaleX(1.0160);">Vivamus a mi.</span>
<div class="a" style="left:166.3px;top:671.2px;width:3.2px;height:3.2px;background:#111;border-radius:50%"></div>
<div class="a" style="left:166.3px;top:706px;width:3.2px;height:3.2px;background:#111;border-radius:50%"></div>
<div class="a" style="left:166.3px;top:726.8px;width:3.2px;height:3.2px;background:#111;border-radius:50%"></div>
<div class="a" style="left:261px;top:53px;width:193px;height:47px;background:rgba(104,104,104,.5)"></div>
<div class="a" style="left:264.6px;top:114px;width:193.4px;height:56.6px;background:rgba(104,104,104,.5)"></div>
<div class="a" style="left:481px;top:38px;width:125.5px;height:117.3px;background:rgba(104,104,104,.5)"></div>
<svg style="left:0;top:0" width="643" height="834" viewBox="545 141 643 834" fill="none" stroke="rgba(104,104,104,.5)" stroke-width="14"><path d="M858.5,381 C 875,376 895,372.5 910,374.5 S 928,380.5 937.5,380.5"/><path d="M841.3,457.4 C 865,458.5 890,458.5 926,454.6"/><path d="M835.5,793.3 C 853,791.5 860,789 872,789 S 905,792 924.3,795.4"/></svg></div>
<div class="a" style="left:830.9px;top:785.5px;width:8px;height:14px;background:#fff"></div>
<div class="a" style="left:831.9px;top:786.5px;width:6px;height:12px;background:linear-gradient(#35c76f 0 2px,#8be0ad 2px 3px,#35c76f 3px 6px,#8be0ad 6px 7px,#35c76f 7px)"></div>
<div class="a" style="left:875.1px;top:785.5px;width:8px;height:14px;background:#fff"></div>
<div class="a" style="left:876.1px;top:786.5px;width:6px;height:12px;background:linear-gradient(#35c76f 0 2px,#8be0ad 2px 3px,#35c76f 3px 6px,#8be0ad 6px 7px,#35c76f 7px)"></div>
<div class="a" style="left:919.1px;top:785.5px;width:8px;height:14px;background:#fff"></div>
<div class="a" style="left:920.1px;top:786.5px;width:6px;height:12px;background:linear-gradient(#35c76f 0 2px,#8be0ad 2px 3px,#35c76f 3px 6px,#8be0ad 6px 7px,#35c76f 7px)"></div>
<div class="a" style="left:713px;top:290px;width:6px;height:1px;background:#000"></div>
<div class="a" style="left:722px;top:290px;width:6px;height:1px;background:#000"></div>
<div class="a" style="left:720px;top:283px;width:1px;height:6px;background:#000"></div>
<div class="a" style="left:720px;top:292px;width:1px;height:6px;background:#000"></div>
<div class="a" style="left:720px;top:290px;width:1px;height:1px;background:#000"></div>
<div class="a" style="left:728px;top:298px;width:8px;height:6px;border:1px solid #000;background:#fff"></div>
<div class="a" style="left:1500px;top:103px;width:375px;height:1px;background:#b2b0ae"></div>
<div class="a" style="left:1501px;top:104px;width:374px;height:924px;background:#fdfdfd"></div>
<div class="a" style="left:1500px;top:103px;width:1px;height:926px;background:#b2b0ae"></div>
<div class="a" style="left:1506px;top:104px;width:1px;height:924px;background:#b2b0ae"></div>
<div class="a" style="left:1500px;top:1028px;width:375px;height:1px;background:#b2b0ae"></div>
<div class="a" style="left:1501px;top:529px;width:5px;height:74px;background:#8e9294;border-radius:2px"></div>
<svg style="left:1501px;top:561px" width="6" height="10" viewBox="0 0 6 10"><path d="M1,1.4 L4.8,5 L1,8.6z" fill="#fff"/></svg>
<div class="a" style="left:1511.5px;top:107.2px;width:363.5px;height:920.8px;background:#f6f5f4"></div>
<div class="a" style="left:1511.5px;top:107.2px;width:345.5px;height:918.4px;border:1px solid #e9e7e5;border-top:none"></div>
<div class="a" style="left:1516px;top:114px;width:2px;height:14px;background:repeating-linear-gradient(#5a5e60 0 2px,transparent 2px 4px)"></div>
<span class="t ui b" style="left:1525.0px;top:113.8px;font-size:15px;transform-origin:0 50%;transform:scaleX(0.9609);">Properties</span>
<svg style="left:1842px;top:119px" width="10" height="10" viewBox="0 0 10 10"><path d="M2,2 l6,6 M8,2 l-6,6" stroke="#2e3436" stroke-width="1.1"/></svg>
<div class="a" style="left:1512px;top:134px;width:344px;height:27px;background:linear-gradient(#e8e6e4,#efedeb 50%,#f5f4f3)"></div>
<svg style="left:1516px;top:142px" width="12" height="12" viewBox="-6 -6 12 12"><circle r="4.7" fill="#ecebea" stroke="#5b5f61" stroke-width="1"/><path d="M-1.2,-2.8 L1.6,0 L-1.2,2.8" fill="none" stroke="#5b5f61" stroke-width="1.1"/></svg>
<span class="t ui b" style="left:1532.0px;top:141.7px;font-size:14.7px;transform-origin:0 50%;transform:scaleX(0.9945);">Character</span>
<svg style="left:1838.5px;top:144px" width="14" height="14" viewBox="-7 -7 14 14"><g fill="#c9c6c2"><rect x="-1" y="-5.4" width="2" height="2.2" transform="rotate(0)"/><rect x="-1" y="-5.4" width="2" height="2.2" transform="rotate(45)"/><rect x="-1" y="-5.4" width="2" height="2.2" transform="rotate(90)"/><rect x="-1" y="-5.4" width="2" height="2.2" transform="rotate(135)"/><rect x="-1" y="-5.4" width="2" height="2.2" transform="rotate(180)"/><rect x="-1" y="-5.4" width="2" height="2.2" transform="rotate(225)"/><rect x="-1" y="-5.4" width="2" height="2.2" transform="rotate(270)"/><rect x="-1" y="-5.4" width="2" height="2.2" transform="rotate(315)"/></g><circle r="3.6" fill="none" stroke="#c9c6c2" stroke-width="1.6"/><circle r="1.3" fill="none" stroke="#c9c6c2" stroke-width=".8"/></svg>
<div class="a" style="left:1512px;top:161px;width:344px;height:27px;background:linear-gradient(#e8e6e4,#efedeb 50%,#f5f4f3)"></div>
<svg style="left:1516px;top:169px" width="12" height="12" viewBox="-6 -6 12 12"><circle r="4.7" fill="#ecebea" stroke="#5b5f61" stroke-width="1"/><path d="M-1.2,-2.8 L1.6,0 L-1.2,2.8" fill="none" stroke="#5b5f61" stroke-width="1.1"/></svg>
<span class="t ui b" style="left:1532.0px;top:168.7px;font-size:14.7px;transform-origin:0 50%;transform:scaleX(0.9882);">Paragraph</span>
<svg style="left:1838.5px;top:171px" width="14" height="14" viewBox="-7 -7 14 14"><g fill="#c9c6c2"><rect x="-1" y="-5.4" width="2" height="2.2" transform="rotate(0)"/><rect x="-1" y="-5.4" width="2" height="2.2" transform="rotate(45)"/><rect x="-1" y="-5.4" width="2" height="2.2" transform="rotate(90)"/><rect x="-1" y="-5.4" width="2" height="2.2" transform="rotate(135)"/><rect x="-1" y="-5.4" width="2" height="2.2" transform="rotate(180)"/><rect x="-1" y="-5.4" width="2" height="2.2" transform="rotate(225)"/><rect x="-1" y="-5.4" width="2" height="2.2" transform="rotate(270)"/><rect x="-1" y="-5.4" width="2" height="2.2" transform="rotate(315)"/></g><circle r="3.6" fill="none" stroke="#c9c6c2" stroke-width="1.6"/><circle r="1.3" fill="none" stroke="#c9c6c2" stroke-width=".8"/></svg>
<div class="a" style="left:1512px;top:188px;width:344px;height:27px;background:linear-gradient(#e8e6e4,#efedeb 50%,#f5f4f3)"></div>
<svg style="left:1516px;top:196px" width="12" height="12" viewBox="-6 -6 12 12"><circle r="4.7" fill="#ecebea" stroke="#5b5f61" stroke-width="1"/><path d="M-2.8,-1.2 L0,1.6 L2.8,-1.2" fill="none" stroke="#5b5f61" stroke-width="1.1"/></svg>
<span class="t ui b" style="left:1532.0px;top:195.7px;font-size:14.7px;transform-origin:0 50%;transform:scaleX(0.9535);">Line</span>
<svg style="left:1838.5px;top:198px" width="14" height="14" viewBox="-7 -7 14 14"><g fill="#c9c6c2"><rect x="-1" y="-5.4" width="2" height="2.2" transform="rotate(0)"/><rect x="-1" y="-5.4" width="2" height="2.2" transform="rotate(45)"/><rect x="-1" y="-5.4" width="2" height="2.2" transform="rotate(90)"/><rect x="-1" y="-5.4" width="2" height="2.2" transform="rotate(135)"/><rect x="-1" y="-5.4" width="2" height="2.2" transform="rotate(180)"/><rect x="-1" y="-5.4" width="2" height="2.2" transform="rotate(225)"/><rect x="-1" y="-5.4" width="2" height="2.2" transform="rotate(270)"/><rect x="-1" y="-5.4" width="2" height="2.2" transform="rotate(315)"/></g><circle r="3.6" fill="none" stroke="#c9c6c2" stroke-width="1.6"/><circle r="1.3" fill="none" stroke="#c9c6c2" stroke-width=".8"/></svg>
<div class="a" style="left:1512px;top:381px;width:344px;height:27px;background:linear-gradient(#e8e6e4,#efedeb 50%,#f5f4f3)"></div>
<svg style="left:1516px;top:389px" width="12" height="12" viewBox="-6 -6 12 12"><circle r="4.7" fill="#ecebea" stroke="#5b5f61" stroke-width="1"/><path d="M-2.8,-1.2 L0,1.6 L2.8,-1.2" fill="none" stroke="#5b5f61" stroke-width="1.1"/></svg>
<span class="t ui b" style="left:1532.0px;top:388.7px;font-size:14.7px;transform-origin:0 50%;transform:scaleX(0.9440);">Position and Size</span>
<svg style="left:1838.5px;top:391px" width="14" height="14" viewBox="-7 -7 14 14"><g fill="#c9c6c2"><rect x="-1" y="-5.4" width="2" height="2.2" transform="rotate(0)"/><rect x="-1" y="-5.4" width="2" height="2.2" transform="rotate(45)"/><rect x="-1" y="-5.4" width="2" height="2.2" transform="rotate(90)"/><rect x="-1" y="-5.4" width="2" height="2.2" transform="rotate(135)"/><rect x="-1" y="-5.4" width="2" height="2.2" transform="rotate(180)"/><rect x="-1" y="-5.4" width="2" height="2.2" transform="rotate(225)"/><rect x="-1" y="-5.4" width="2" height="2.2" transform="rotate(270)"/><rect x="-1" y="-5.4" width="2" height="2.2" transform="rotate(315)"/></g><circle r="3.6" fill="none" stroke="#c9c6c2" stroke-width="1.6"/><circle r="1.3" fill="none" stroke="#c9c6c2" stroke-width=".8"/></svg>
<div class="a" style="left:1560px;top:221.3px;width:64.7px;height:33.3px;background:linear-gradient(#f7f6f5,#edebe9);border:1px solid #cdc7c2;border-radius:4px"></div><div class="a" style="left:1570px;top:231px;width:12px;height:15px;background:#fff"></div><div class="a" style="left:1570px;top:237.3px;width:12px;height:2px;background:#858585"></div>
<div class="arr" style="left:1602.2px;top:235.7px;border-width:5.5px 5.5px 0 5.5px;border-top-color:#222"></div>
<div class="a" style="left:1628px;top:221.3px;width:104.8px;height:33.3px;background:linear-gradient(#f7f6f5,#edebe9);border:1px solid #cdc7c2;border-radius:4px"></div><div class="a" style="left:1638px;top:231px;width:52.3px;height:15px;background:#fff"></div><div class="a" style="left:1638px;top:237.3px;width:52.3px;height:2px;background:#858585"></div>
<div class="arr" style="left:1710.7px;top:235.7px;border-width:5.5px 5.5px 0 5.5px;border-top-color:#222"></div>
<div class="a" style="left:1736.3px;top:221.3px;width:64.7px;height:33.3px;background:linear-gradient(#f7f6f5,#edebe9);border:1px solid #cdc7c2;border-radius:4px"></div><div class="a" style="left:1746px;top:231px;width:12px;height:15px;background:#fff"></div><div class="a" style="left:1746px;top:237.3px;width:12px;height:2px;background:#858585"></div>
<div class="arr" style="left:1778.5px;top:235.7px;border-width:5.5px 5.5px 0 5.5px;border-top-color:#222"></div>
<span class="t ui" style="left:1518.6px;top:270.9px;font-size:15px;transform-origin:0 50%;transform:scaleX(1.0584);">Width:</span>
<div class="a" style="left:1625px;top:273.3px;width:76px;height:8px;background:#6b6b6b"></div>
<div class="arr" style="left:1717.2px;top:275px;border-width:3px 2.6px 0 2.6px"></div>
<span class="t ui" style="left:1518.6px;top:311.0px;font-size:15px;transform-origin:0 50%;transform:scaleX(0.9796);">Color:</span>
<svg style="left:1627px;top:309px" width="13" height="14" viewBox="0 0 13 14"><path d="M0.5,1.5 h11 M0.5,4.5 h8 M0.5,7.5 h8" stroke="#3a3d3f" stroke-width="1.2"/><path d="M0.5,11.5 h12" stroke="#3a3d3f" stroke-width="1" stroke-dasharray="1 1"/><path d="M10.6,5 c1,1.4 1.6,2.2 1.6,3 a1.6,1.6 0 0 1 -3.2,0 c0,-.8 .6,-1.6 1.6,-3z" fill="#3a3d3f"/></svg>
<div class="a" style="left:1642px;top:309.6px;width:65.5px;height:13.4px;background:#6b6b6b;border:1px solid #111"></div>
<div class="arr" style="left:1718.1px;top:315px;border-width:3px 2.6px 0 2.6px"></div>
<span class="t ui" style="left:1518.6px;top:351.4px;font-size:15px;transform-origin:0 50%;transform:scaleX(1.0081);">Transparency:</span>
<div class="a" style="left:1622px;top:341.2px;width:116px;height:33.4px;background:#fff;border:1px solid #cdc7c2;border-radius:4px"></div><div class="a" style="left:1668.4px;top:342.2px;width:1px;height:31.4px;background:#e6e2de"></div><div class="a" style="left:1703.4px;top:342.2px;width:1px;height:31.4px;background:#e6e2de"></div><div class="a" style="left:1680.9px;top:356.9px;width:10px;height:2px;background:#2e3436"></div><div class="a" style="left:1715.7px;top:356.9px;width:10px;height:2px;background:#2e3436"></div><div class="a" style="left:1719.7px;top:352.9px;width:2px;height:10px;background:#2e3436"></div><span class="t ui" style="left:1624.7px;top:350.3px;font-size:15px;transform-origin:0 50%;transform:scaleX(1.0223);">50%</span>
<span class="t ui" style="left:1518.6px;top:415.6px;font-size:15px;transform-origin:0 50%;transform:scaleX(0.9677);">Position X:</span>
<span class="t ui" style="left:1687.6px;top:415.6px;font-size:15px;transform-origin:0 50%;transform:scaleX(0.9772);">Position Y:</span>
<div class="a" style="left:1518.3px;top:438.3px;width:162.3px;height:33.5px;background:#fff;border:1px solid #cdc7c2;border-radius:4px"></div><div class="a" style="left:1611px;top:439.3px;width:1px;height:31.5px;background:#e6e2de"></div><div class="a" style="left:1646.3px;top:439.3px;width:1px;height:31.5px;background:#e6e2de"></div><div class="a" style="left:1623.65px;top:454.05px;width:10px;height:2px;background:#2e3436"></div><div class="a" style="left:1658.45px;top:454.05px;width:10px;height:2px;background:#2e3436"></div><div class="a" style="left:1662.45px;top:450.05px;width:2px;height:10px;background:#2e3436"></div><span class="t ui" style="left:1520.4px;top:447.4px;font-size:15px;transform-origin:0 50%;transform:scaleX(1.0365);">3.34 &quot;</span>
<div class="a" style="left:1687.3px;top:438.3px;width:162.7px;height:33.5px;background:#fff;border:1px solid #cdc7c2;border-radius:4px"></div><div class="a" style="left:1780.3px;top:439.3px;width:1px;height:31.5px;background:#e6e2de"></div><div class="a" style="left:1815.3px;top:439.3px;width:1px;height:31.5px;background:#e6e2de"></div><div class="a" style="left:1792.8px;top:454.05px;width:10px;height:2px;background:#2e3436"></div><div class="a" style="left:1827.65px;top:454.05px;width:10px;height:2px;background:#2e3436"></div><div class="a" style="left:1831.65px;top:450.05px;width:2px;height:10px;background:#2e3436"></div><span class="t ui" style="left:1689.7px;top:447.4px;font-size:15px;transform-origin:0 50%;transform:scaleX(1.0365);">8.04 &quot;</span>
<span class="t ui" style="left:1518.6px;top:479.5px;font-size:15px;transform-origin:0 50%;transform:scaleX(1.0584);">Width:</span>
<span class="t ui" style="left:1687.6px;top:479.5px;font-size:15px;transform-origin:0 50%;transform:scaleX(1.0393);">Height:</span>
<div class="a" style="left:1518.3px;top:502.2px;width:162.3px;height:33.6px;background:#fff;border:1px solid #cdc7c2;border-radius:4px"></div><div class="a" style="left:1611px;top:503.2px;width:1px;height:31.6px;background:#e6e2de"></div><div class="a" style="left:1646.3px;top:503.2px;width:1px;height:31.6px;background:#e6e2de"></div><div class="a" style="left:1623.65px;top:518px;width:10px;height:2px;background:#2e3436"></div><div class="a" style="left:1658.45px;top:518px;width:10px;height:2px;background:#2e3436"></div><div class="a" style="left:1662.45px;top:514px;width:2px;height:10px;background:#2e3436"></div><span class="t ui" style="left:1520.4px;top:511.4px;font-size:15px;transform-origin:0 50%;transform:scaleX(0.9331);">1.16 &quot;</span>
<div class="a" style="left:1687.3px;top:502.2px;width:162.7px;height:33.6px;background:#fff;border:1px solid #cdc7c2;border-radius:4px"></div><div class="a" style="left:1780.3px;top:503.2px;width:1px;height:31.6px;background:#e6e2de"></div><div class="a" style="left:1815.3px;top:503.2px;width:1px;height:31.6px;background:#e6e2de"></div><div class="a" style="left:1792.8px;top:518px;width:10px;height:2px;background:#2e3436"></div><div class="a" style="left:1827.65px;top:518px;width:10px;height:2px;background:#2e3436"></div><div class="a" style="left:1831.65px;top:514px;width:2px;height:10px;background:#2e3436"></div><span class="t ui" style="left:1689.7px;top:511.4px;font-size:15px;transform-origin:0 50%;transform:scaleX(1.0365);">0.08 &quot;</span>
<div class="a" style="left:1521.2px;top:545.2px;width:15.6px;height:16px;background:linear-gradient(#fff,#f4f2f0);border:1px solid #c3bdb8;border-radius:3px"></div>
<span class="t ui" style="left:1544.4px;top:545.7px;font-size:15px;transform-origin:0 50%;transform:scaleX(0.9914);">Keep ratio</span>
<span class="t ui" style="left:1518.6px;top:571.3px;font-size:15px;transform-origin:0 50%;transform:scaleX(1.0026);">Rotation:</span>
<svg style="left:0;top:0" width="1875" height="700"><path d="M1554.10,598.30 A32,32 0 0 1 1586.10,630.30" fill="none" stroke="#fff" stroke-width="8"/><path d="M1586.10,629.74 A32,32 0 0 1 1576.73,652.93" fill="none" stroke="#fff" stroke-width="8"/><path d="M1554.10,662.30 A32,32 0 0 1 1531.47,652.93" fill="none" stroke="#dedcda" stroke-width="8"/><path d="M1531.87,653.32 A32,32 0 0 1 1522.10,630.30" fill="none" stroke="#c6c4c2" stroke-width="8"/><path d="M1522.10,630.86 A32,32 0 0 1 1531.47,607.67" fill="none" stroke="#dddbd9" stroke-width="8"/><path d="M1582.1,630.3 L1590.1,630.3M1573.2,649.4 L1578.4,654.6M1554.1,658.3 L1554.1,666.3M1535.0,649.4 L1529.8,654.6M1526.1,630.3 L1518.1,630.3M1535.0,611.2 L1529.8,606.0M1554.1,602.3 L1554.1,594.3M1573.2,611.2 L1578.4,606.0" stroke="#1c1c1c" stroke-width="1" fill="none"/><path d="M1582.5,637.9 L1587.9,639.4M1579.6,645.0 L1584.4,647.8M1568.8,655.8 L1571.6,660.6M1561.7,658.7 L1563.2,664.1M1546.5,658.7 L1545.0,664.1M1539.4,655.8 L1536.6,660.6M1528.6,645.0 L1523.8,647.8M1525.7,637.9 L1520.3,639.4M1525.7,622.7 L1520.3,621.2M1528.6,615.6 L1523.8,612.8M1539.4,604.8 L1536.6,600.0M1546.5,601.9 L1545.0,596.5M1561.7,601.9 L1563.2,596.5M1568.8,604.8 L1571.6,600.0M1579.6,615.6 L1584.4,612.8M1582.5,622.7 L1587.9,621.2" stroke="#4a4a4a" stroke-width=".8" fill="none"/><path d="M1554.1,630.3 L1525.6,628.2" stroke="#111" stroke-width="1.2"/><circle cx="1522.5" cy="626.8" r="2.1" fill="#fff" stroke="#111" stroke-width="1"/></svg>
<div class="a" style="left:1687.3px;top:594.2px;width:162.7px;height:33.6px;background:#fff;border:1px solid #cdc7c2;border-radius:4px"></div>
<div class="a" style="left:1815.8px;top:595.2px;width:33.2px;height:31.6px;background:linear-gradient(#f5f4f2,#eae7e4);border-left:1px solid #cdc7c2;border-radius:0 3px 3px 0"></div>
<div class="arr" style="left:1827.3px;top:608.7px;border-width:5.5px 5.5px 0 5.5px;border-top-color:#222"></div>
<span class="t ui" style="left:1698.0px;top:603.5px;font-size:15px;transform-origin:0 50%;transform:scaleX(0.9944);">173.56°</span>
<span class="t ui" style="left:1687.6px;top:643.6px;font-size:15px;transform-origin:0 50%;transform:scaleX(1.0196);">Flip:</span>
<svg style="left:0;top:0" width="1875" height="700"><path d="M1806.2,650.6 L1818,644.2 V650.6z M1806.2,651.4 L1818,651.6 V655.9z M1836,644.6 V656 H1830.7z M1837.4,644.6 L1843.1,656 H1837.4z" fill="#3a3d3f"/></svg>
<svg style="left:1864px;top:111px" width="24" height="24" viewBox="-12 -12 24 24"><circle r="8.6" fill="#dcdad7" stroke="#a9a6a3" stroke-width="1"/><circle r="10" fill="none" stroke="#c4c1be" stroke-width="2.4" stroke-dasharray="3.4 2.9"/><circle r="4" fill="#f6f5f4" stroke="#a9a6a3" stroke-width="1.2"/></svg>
<div class="a" style="left:1861px;top:146.3px;width:20px;height:31.3px;background:#fafaf9;border:1px solid #c8c4c0;border-radius:4px"></div>
<div class="a" style="left:1869px;top:154.6px;width:10px;height:15.4px;border:1.4px solid #3a3d3f;border-top-width:3.4px"></div>
<div class="a" style="left:1871.6px;top:160px;width:6px;height:8.4px;background:#3a3d3f"></div>
<svg style="left:1868px;top:185px" width="10" height="24" viewBox="0 0 10 24"><path d="M1,11.6 L9,3.2 V20z" fill="#3a3d3f"/></svg>
<svg style="left:1868px;top:216px" width="10" height="26" viewBox="0 0 10 26"><path d="M3,9 H10" stroke="#3a3d3f" stroke-width="1.8"/><path d="M10,23.6 H1.6 V15.2 L10,18.6" stroke="#3a3d3f" stroke-width="1.3" fill="none"/></svg>
<svg style="left:1868px;top:258px" width="10" height="24" viewBox="0 0 10 24"><path d="M10,2.2 H1.2 V21.6 H10" stroke="#3a3d3f" stroke-width="1.3" fill="none"/><circle cx="8.6" cy="7" r="1.8" fill="none" stroke="#3a3d3f"/><path d="M1.6,18 L8,11.6 L10,13.4" stroke="#3a3d3f" stroke-width="1.3" fill="none"/></svg>
<svg style="left:1868px;top:292px" width="10" height="24" viewBox="0 0 10 24"><circle cx="12" cy="12" r="10" fill="none" stroke="#3a3d3f" stroke-width="1.3"/><path d="M8,15 L11,12" stroke="#3a3d3f" stroke-width="1.3"/></svg>
<div class="a" style="left:227px;top:1004px;width:1272px;height:27px;background:#f6f5f4"></div>
<svg style="left:241.5px;top:1009px" width="12" height="16" viewBox="0 0 12 16"><path d="M1.2,0.4 V15.6" stroke="#b2b0ae" stroke-width="1.4"/><path d="M9.6,0.6 L2.2,8 L9.6,15.4z" fill="#b2b0ae"/></svg>
<svg style="left:266px;top:1009px" width="12" height="16" viewBox="0 0 12 16"><path d="M9.8,0.6 L2.4,8 L9.8,15.4z" fill="#b2b0ae"/></svg>
<svg style="left:290.5px;top:1009px" width="12" height="16" viewBox="0 0 12 16"><path d="M2,0.6 L9.4,8 L2,15.4z" fill="#b2b0ae"/></svg>
<svg style="left:314.5px;top:1009px" width="12" height="16" viewBox="0 0 12 16"><path d="M10.2,0.4 V15.6" stroke="#b2b0ae" stroke-width="1.4"/><path d="M1.8,0.6 L9.2,8 L1.8,15.4z" fill="#b2b0ae"/></svg>
<div class="a" style="left:346px;top:1005px;width:97.5px;height:25px;background:#fff"></div>
<div class="a" style="left:346px;top:1026px;width:97.5px;height:4px;background:#8e9294"></div>
<span class="t ui" style="left:376.0px;top:1010.0px;font-size:13.5px;transform-origin:0 50%;transform:scaleX(0.8879);">Layout</span>
<span class="t ui" style="left:473.0px;top:1010.0px;font-size:13.5px;transform-origin:0 50%;transform:scaleX(0.9248);">Controls</span>
<span class="t ui" style="left:580.0px;top:1010.0px;font-size:13.5px;transform-origin:0 50%;transform:scaleX(0.8967);">Dimension Lines</span>
<div class="a" style="left:0px;top:1029px;width:1875px;height:1px;background:#fbfbfa"></div>
<div class="a" style="left:0px;top:1030px;width:1875px;height:1px;background:#b5b3b1"></div>
<div class="a" style="left:0px;top:1031px;width:1875px;height:22px;background:#f6f5f4"></div>
<span class="t ui" style="left:-17.5px;top:1036.4px;font-size:13.5px;transform-origin:0 50%;transform:scaleX(0.8897);">Slide 1 of 1 (Layout)</span>
<div class="a" style="left:94px;top:1034px;width:1px;height:17px;background:#d9d6d2"></div>
<span class="t ui" style="left:103.2px;top:1036.4px;font-size:13.5px;transform-origin:0 50%;transform:scaleX(0.9166);">Freeform</span>
<span class="t ui" style="left:157.0px;top:1036.4px;font-size:13.5px;transform-origin:0 50%;transform:scaleX(0.8695);">Line</span>
<span class="t ui" style="left:182.0px;top:1036.4px;font-size:13.5px;transform-origin:0 50%;transform:scaleX(0.8926);">&#x27;FreeformRedactionShape&#x27;</span>
<span class="t ui" style="left:329.0px;top:1036.4px;font-size:13.5px;transform-origin:0 50%;transform:scaleX(0.8669);">selected</span>
<div class="a" style="left:779px;top:1034px;width:1px;height:17px;background:#d9d6d2"></div>
<span class="t ui" style="left:788.0px;top:1036.4px;font-size:13.5px;transform-origin:0 50%;transform:scaleX(0.9116);">Default</span>
<div class="a" style="left:1127.5px;top:1034px;width:1px;height:17px;background:#d9d6d2"></div>
<svg style="left:1137px;top:1034px" width="16" height="14" viewBox="1137 1034 16 14"><path d="M1139.5,1035 V1039.6 M1137.2,1037.3 H1141.8" stroke="#1e8ee6" stroke-width="1.1"/><path d="M1142.4,1037.3 H1150.4 V1044.4 H1139.5 V1040.4" fill="none" stroke="#3a3d3f" stroke-width="1.1"/></svg>
<span class="t ui" style="left:1158.0px;top:1036.4px;font-size:13.5px;transform-origin:0 50%;transform:scaleX(0.9324);">3.34 / 8.04</span>
<svg style="left:1387px;top:1034px" width="18" height="14" viewBox="1387 1034 18 14"><path d="M1388.8,1039 V1045 M1387.6,1039 H1390 M1387.6,1045 H1390 M1392.4,1036.5 H1401.6 M1392.4,1035 V1038 M1401.6,1035 V1038" stroke="#1e8ee6" stroke-width="1"/><path d="M1392.6,1040 H1401.4 V1044.5 H1392.6z" fill="none" stroke="#3a3d3f" stroke-width="1.1"/></svg>
<span class="t ui" style="left:1408.6px;top:1036.4px;font-size:13.5px;transform-origin:0 50%;transform:scaleX(0.8816);">1.16 x 0.08</span>
<div class="a" style="left:1636px;top:1034px;width:1px;height:17px;background:#d9d6d2"></div>
<div class="a" style="left:1658px;top:1034px;width:1px;height:17px;background:#d9d6d2"></div>
<div class="a" style="left:1687px;top:1034px;width:1px;height:17px;background:#d9d6d2"></div>
<div class="a" style="left:1709px;top:1034px;width:1px;height:17px;background:#d9d6d2"></div>
<div class="a" style="left:1852px;top:1034px;width:1px;height:17px;background:#d9d6d2"></div>
<svg style="left:1643.6px;top:1036.8px" width="11" height="11" viewBox="0 0 11 11"><path d="M.8,.8 H7.6 L10,3.2 V10 H.8z M2.8,.8 V3.8 H7.2 V.8 M2.8,10 V6.4 H8 V10" fill="none" stroke="#dc3a4e" stroke-width="1"/></svg>
<svg style="left:1694px;top:1036px" width="12" height="12" viewBox="-6 -6 12 12"><path d="M0,-5.6 L2,-3.2 H-2z M0,5.6 L2,3.2 H-2z M-5.6,0 L-3.2,-2 V2z M5.6,0 L3.2,-2 V2z" fill="#3a3d3f"/><rect x="-1.3" y="-1.3" width="2.6" height="2.6" fill="none" stroke="#3a3d3f" stroke-width=".9"/></svg>
<div class="a" style="left:1720px;top:1042.7px;width:7.2px;height:1.2px;background:#3a3d3f"></div>
<div class="a" style="left:1734px;top:1041.1px;width:97px;height:2.6px;background:#8e9294;border-radius:1.3px"></div>
<div class="a" style="left:1779.3px;top:1039px;width:2.6px;height:7px;background:#8e9294;border-radius:1px"></div>
<div class="a" style="left:1766.4px;top:1038.4px;width:8.6px;height:8.6px;background:#fff;border:1.3px solid #3a3d3f;border-radius:50%"></div>
<div class="a" style="left:1836.6px;top:1042.7px;width:7.6px;height:1.2px;background:#3a3d3f"></div>
<div class="a" style="left:1839.8px;top:1039.5px;width:1.2px;height:7.6px;background:#3a3d3f"></div>
<span class="t ui" style="left:1859.5px;top:1036.4px;font-size:13.5px;transform-origin:0 50%;transform:scaleX(1.0913);">79%</span></div></body></html>
